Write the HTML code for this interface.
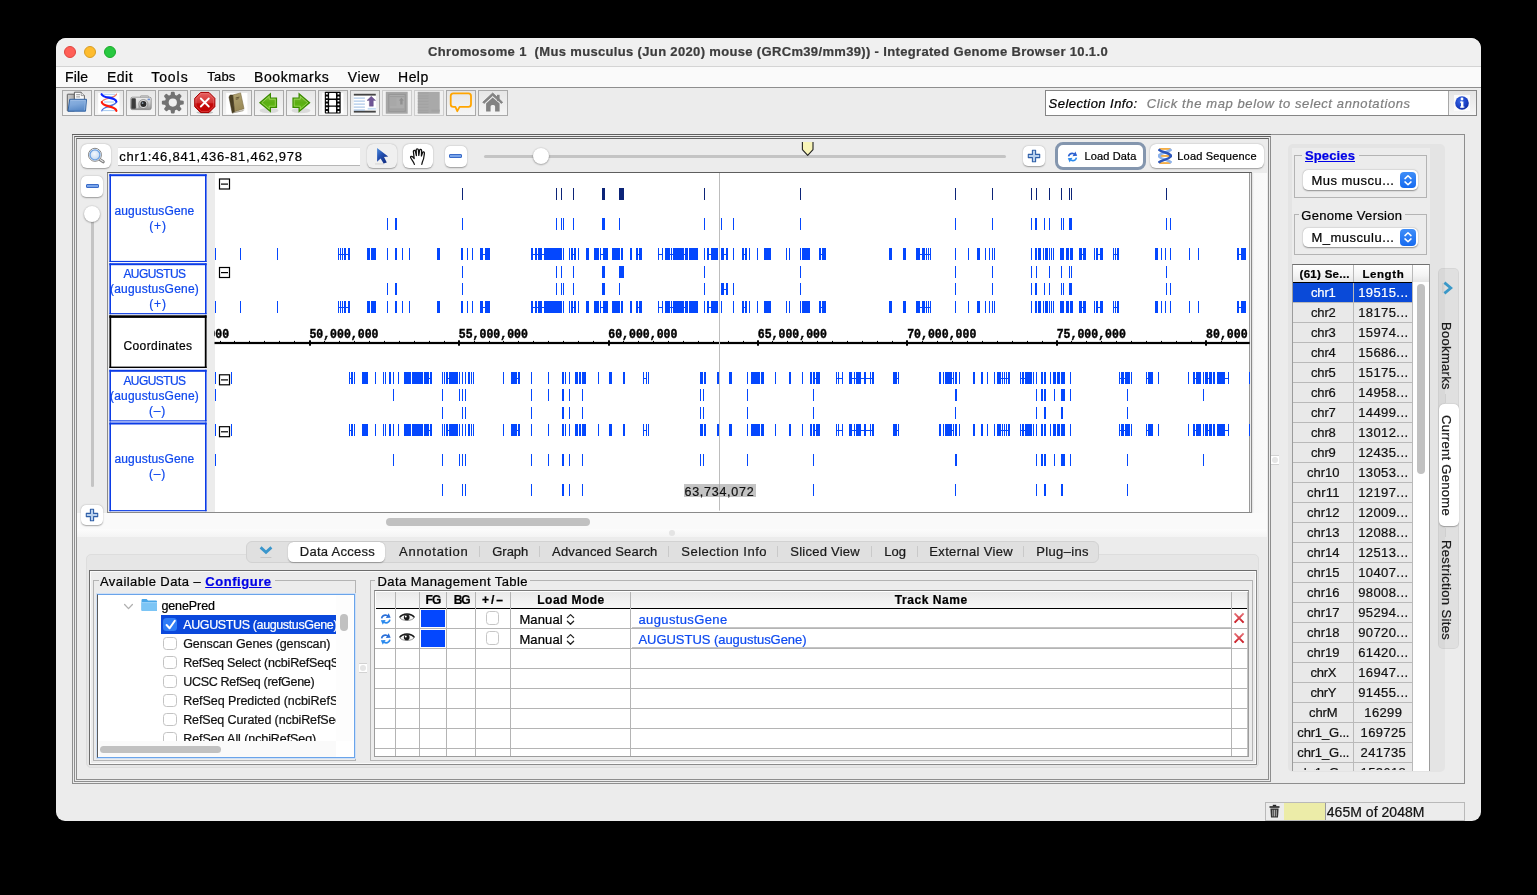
<!DOCTYPE html>
<html><head><meta charset="utf-8"><title>IGB</title>
<style>
html,body{margin:0;padding:0;background:#000;}
body{width:1537px;height:895px;position:relative;overflow:hidden;font-family:"Liberation Sans",sans-serif;}
div,span.t,svg{position:absolute;box-sizing:border-box;}
span.t{white-space:pre;display:block;-webkit-text-stroke:0.22px currentColor;}
</style></head><body><div id="w" style="left:0;top:0;width:1537px;height:895px;will-change:transform;">
<div style="left:56px;top:38px;width:1425px;height:783px;background:#ececec;border-radius:10px 10px 9px 9px;overflow:hidden;"></div>
<div style="left:56px;top:38px;width:1425px;height:29px;background:#f0f0f0;border-radius:10px 10px 0 0;border-bottom:1px solid #d4d4d4;"></div>
<div style="left:64px;top:46px;width:12px;height:12px;background:#ff5f57;border-radius:50%;border:0.5px solid #e0443e;"></div>
<div style="left:84px;top:46px;width:12px;height:12px;background:#febc2e;border-radius:50%;border:0.5px solid #d89e24;"></div>
<div style="left:104px;top:46px;width:12px;height:12px;background:#28c840;border-radius:50%;border:0.5px solid #1aab29;"></div>
<span class="t" style="left:428.00px;top:43.00px;height:17px;line-height:17px;font-size:13px;color:#3d3d3d;font-family:'Liberation Sans',sans-serif;font-weight:bold;letter-spacing:0.340px;">Chromosome 1  (Mus musculus (Jun 2020) mouse (GRCm39/mm39)) - Integrated Genome Browser 10.1.0</span>
<div style="left:56px;top:67px;width:1425px;height:20px;background:#fafafa;"></div>
<div style="left:56px;top:87px;width:1425px;height:1.2px;background:#8e8e8e;"></div>
<span class="t" style="left:65.00px;top:67.50px;height:18px;line-height:18px;font-size:14px;color:#000;font-family:'Liberation Sans',sans-serif;letter-spacing:0.184px;">File</span>
<span class="t" style="left:106.90px;top:67.50px;height:18px;line-height:18px;font-size:14px;color:#000;font-family:'Liberation Sans',sans-serif;letter-spacing:0.543px;">Edit</span>
<span class="t" style="left:151.20px;top:67.50px;height:18px;line-height:18px;font-size:14px;color:#000;font-family:'Liberation Sans',sans-serif;letter-spacing:0.943px;">Tools</span>
<span class="t" style="left:207.20px;top:68.00px;height:17px;line-height:17px;font-size:13px;color:#000;font-family:'Liberation Sans',sans-serif;letter-spacing:0.235px;">Tabs</span>
<span class="t" style="left:254.10px;top:67.50px;height:18px;line-height:18px;font-size:14px;color:#000;font-family:'Liberation Sans',sans-serif;letter-spacing:0.575px;">Bookmarks</span>
<span class="t" style="left:347.80px;top:67.50px;height:18px;line-height:18px;font-size:14px;color:#000;font-family:'Liberation Sans',sans-serif;letter-spacing:0.501px;">View</span>
<span class="t" style="left:398.10px;top:67.50px;height:18px;line-height:18px;font-size:14px;color:#000;font-family:'Liberation Sans',sans-serif;letter-spacing:0.426px;">Help</span>
<div style="left:62px;top:90px;width:30px;height:25.5px;background:linear-gradient(#e7e7e7,#f5f5f5);border:1px solid #a9a9a9;"></div>
<div style="left:94px;top:90px;width:30px;height:25.5px;background:linear-gradient(#e7e7e7,#f5f5f5);border:1px solid #a9a9a9;"></div>
<div style="left:126px;top:90px;width:30px;height:25.5px;background:linear-gradient(#e7e7e7,#f5f5f5);border:1px solid #a9a9a9;"></div>
<div style="left:158px;top:90px;width:30px;height:25.5px;background:linear-gradient(#e7e7e7,#f5f5f5);border:1px solid #a9a9a9;"></div>
<div style="left:190px;top:90px;width:30px;height:25.5px;background:linear-gradient(#e7e7e7,#f5f5f5);border:1px solid #a9a9a9;"></div>
<div style="left:222px;top:90px;width:30px;height:25.5px;background:linear-gradient(#e7e7e7,#f5f5f5);border:1px solid #a9a9a9;"></div>
<div style="left:254px;top:90px;width:30px;height:25.5px;background:linear-gradient(#e7e7e7,#f5f5f5);border:1px solid #a9a9a9;"></div>
<div style="left:286px;top:90px;width:30px;height:25.5px;background:linear-gradient(#e7e7e7,#f5f5f5);border:1px solid #a9a9a9;"></div>
<div style="left:318px;top:90px;width:30px;height:25.5px;background:linear-gradient(#e7e7e7,#f5f5f5);border:1px solid #a9a9a9;"></div>
<div style="left:350px;top:90px;width:30px;height:25.5px;background:linear-gradient(#e7e7e7,#f5f5f5);border:1px solid #a9a9a9;"></div>
<div style="left:382px;top:90px;width:30px;height:25.5px;background:#f0f0f0;border:1px solid #cdcdcd;"></div>
<div style="left:414px;top:90px;width:30px;height:25.5px;background:#f0f0f0;border:1px solid #cdcdcd;"></div>
<div style="left:446px;top:90px;width:30px;height:25.5px;background:linear-gradient(#e7e7e7,#f5f5f5);border:1px solid #a9a9a9;"></div>
<div style="left:478px;top:90px;width:30px;height:25.5px;background:linear-gradient(#e7e7e7,#f5f5f5);border:1px solid #a9a9a9;"></div>
<div style="left:1045px;top:90px;width:432px;height:26px;background:#fff;border:1px solid #858585;"></div>
<div style="left:1448px;top:91px;width:28px;height:24px;background:linear-gradient(#e4e4e4,#f6f6f6);border-left:1px solid #a8a8a8;"></div>
<div style="left:1454px;top:94.6px;width:16px;height:16px;background:#fbfbfb;"></div>
<span class="t" style="left:1048.60px;top:94.50px;height:17px;line-height:17px;font-size:13px;color:#000;font-family:'Liberation Sans',sans-serif;font-style:italic;letter-spacing:0.441px;">Selection Info:</span>
<span class="t" style="left:1146.70px;top:94.50px;height:17px;line-height:17px;font-size:13px;color:#7f7f7f;font-family:'Liberation Sans',sans-serif;font-style:italic;letter-spacing:0.605px;">Click the map below to select annotations</span>
<svg style="left:1453.6px;top:94.6px" width="16" height="16" viewBox="0 0 16 16"><defs><radialGradient id="inf" cx="0.4" cy="0.35" r="0.75"><stop offset="0" stop-color="#3a6ae8"/><stop offset="0.6" stop-color="#1a40c4"/><stop offset="1" stop-color="#0a2496"/></radialGradient></defs><circle cx="8" cy="8" r="6.8" fill="url(#inf)"/><rect x="7" y="6.5" width="2.4" height="6" fill="#fff"/><rect x="6" y="6.5" width="2" height="1.2" fill="#fff"/><rect x="6" y="11.5" width="4.4" height="1.1" fill="#fff"/><circle cx="8" cy="4" r="1.4" fill="#fff"/></svg>
<div style="left:72px;top:134px;width:1393px;height:650px;border:1px solid #8e8e8e;background:#ececec;"></div>
<div style="left:72px;top:134px;width:1199px;height:1px;background:#606060;"></div>
<div style="left:74px;top:136px;width:1197px;height:646px;border:1px solid #8e8e8e;border-top-color:#606060;"></div>
<div style="left:76px;top:138px;width:1193px;height:642px;border:1px solid #8e8e8e;border-top-color:#606060;"></div>
<div style="left:81px;top:144px;width:30px;height:24px;background:#fff;border-radius:6px;box-shadow:0 0.5px 1.5px rgba(0,0,0,.35);"></div>
<div style="left:118px;top:146.5px;width:242.3px;height:19px;background:#fff;border-top:1px solid #e2e2e2;border-bottom:1px solid #b6b6b6;"></div>
<span class="t" style="left:119.30px;top:147.90px;height:17px;line-height:17px;font-size:13px;color:#000;font-family:'Liberation Sans',sans-serif;letter-spacing:0.778px;">chr1:46,841,436-81,462,978</span>
<div style="left:367px;top:143.7px;width:30.3px;height:24.5px;background:#f0f0f0;border-radius:6px;box-shadow:0 0.5px 1.3px rgba(0,0,0,.32);"></div>
<div style="left:403px;top:144px;width:30px;height:24px;background:#fff;border-radius:6px;box-shadow:0 0.5px 1.5px rgba(0,0,0,.35);"></div>
<div style="left:444.5px;top:146px;width:22.5px;height:20.5px;background:#fff;border-radius:5px;box-shadow:0 0.5px 1.5px rgba(0,0,0,.35);"></div>
<div style="left:1023px;top:146px;width:22px;height:20px;background:#fff;border-radius:5px;box-shadow:0 0.5px 1.5px rgba(0,0,0,.35);"></div>
<div style="left:484px;top:155px;width:522px;height:2.5px;background:#c4c4c4;border-radius:2px;"></div>
<div style="left:533.3px;top:148.4px;width:16px;height:16px;background:#fff;border-radius:50%;box-shadow:0 0.5px 2px rgba(0,0,0,.45);"></div>
<div style="left:1055.3px;top:141.8px;width:90.3px;height:28.3px;background:#fff;border-radius:8px;border:3px solid #8496ae;"></div>
<div style="left:1150px;top:144px;width:114px;height:24px;background:#fff;border-radius:6px;box-shadow:0 0.5px 1.5px rgba(0,0,0,.35);"></div>
<span class="t" style="left:1084.50px;top:149.40px;height:14px;line-height:14px;font-size:11px;color:#000;font-family:'Liberation Sans',sans-serif;letter-spacing:0.138px;">Load Data</span>
<span class="t" style="left:1177.30px;top:149.40px;height:14px;line-height:14px;font-size:11px;color:#000;font-family:'Liberation Sans',sans-serif;letter-spacing:0.180px;">Load Sequence</span>
<div style="left:107px;top:172px;width:1145px;height:341px;border:1px solid #8a8a8a;border-top-color:#5e5e5e;background:#ececec;"></div>
<div style="left:1252px;top:173px;width:15px;height:340px;background:linear-gradient(90deg,#dedede,#f8f8f8 12%,#fafafa);"></div>
<div style="left:214.5px;top:173px;width:1035px;height:339px;background:#fff;"></div>
<div style="left:1249px;top:173px;width:1px;height:339px;background:#9a9a9a;"></div>
<div style="left:77px;top:513px;width:1190px;height:16px;background:#fafafa;"></div>
<div style="left:77px;top:529px;width:1190px;height:8px;background:linear-gradient(#fcfcfc,#f4f4f4);"></div>
<div style="left:81px;top:176px;width:22px;height:20.5px;background:#fff;border-radius:5px;box-shadow:0 0.5px 1.5px rgba(0,0,0,.35);"></div>
<div style="left:86px;top:183.8px;width:12.5px;height:4.2px;background:#7aa5ea;border:1px solid #3a6bc8;border-radius:1px;"></div>
<div style="left:91px;top:214px;width:2.5px;height:273px;background:#c4c4c4;border-radius:2px;"></div>
<div style="left:84.3px;top:206px;width:16px;height:16px;background:#fff;border-radius:50%;box-shadow:0 0.5px 2px rgba(0,0,0,.45);"></div>
<div style="left:81px;top:504.5px;width:22px;height:20.5px;background:#fff;border-radius:5px;box-shadow:0 0.5px 1.5px rgba(0,0,0,.35);"></div>
<svg style="left:108px;top:173px" width="100" height="339" viewBox="0 0 100 339"><rect x="1.4" y="1" width="97.2" height="337.4" fill="#f3f5fc"/><rect x="1.4" y="1.2" width="97.2" height="87.8" fill="#fff"/><rect x="1.4" y="1.2" width="97.2" height="2.0" fill="#0b3be6"/><rect x="1.4" y="87.9" width="97.2" height="1.1" fill="#0b3be6"/><rect x="1.4" y="1.2" width="1.6" height="87.8" fill="#0b3be6"/><rect x="97.0" y="1.2" width="1.6" height="87.8" fill="#0b3be6"/><rect x="1.4" y="90.2" width="97.2" height="51.0" fill="#fff"/><rect x="1.4" y="90.2" width="97.2" height="2.0" fill="#0b3be6"/><rect x="1.4" y="140.1" width="97.2" height="1.1" fill="#0b3be6"/><rect x="1.4" y="90.2" width="1.6" height="51.0" fill="#0b3be6"/><rect x="97.0" y="90.2" width="1.6" height="51.0" fill="#0b3be6"/><rect x="1.4" y="142.3" width="97.2" height="52.7" fill="#fff"/><rect x="1.4" y="142.3" width="97.2" height="2.6" fill="#000"/><rect x="1.4" y="193.6" width="97.2" height="1.4" fill="#000"/><rect x="1.4" y="142.3" width="1.8" height="52.7" fill="#000"/><rect x="96.8" y="142.3" width="1.8" height="52.7" fill="#000"/><rect x="1.4" y="196.8" width="97.2" height="51.6" fill="#fff"/><rect x="1.4" y="196.8" width="97.2" height="2.0" fill="#0b3be6"/><rect x="1.4" y="247.3" width="97.2" height="1.1" fill="#0b3be6"/><rect x="1.4" y="196.8" width="1.6" height="51.6" fill="#0b3be6"/><rect x="97.0" y="196.8" width="1.6" height="51.6" fill="#0b3be6"/><rect x="1.4" y="249.5" width="97.2" height="88.7" fill="#fff"/><rect x="1.4" y="249.5" width="97.2" height="2.0" fill="#0b3be6"/><rect x="1.4" y="337.1" width="97.2" height="1.1" fill="#0b3be6"/><rect x="1.4" y="249.5" width="1.6" height="88.7" fill="#0b3be6"/><rect x="97.0" y="249.5" width="1.6" height="88.7" fill="#0b3be6"/></svg>
<span class="t" style="left:114.40px;top:202.70px;height:16px;line-height:16px;font-size:12px;color:#0f48ee;font-family:'Liberation Sans',sans-serif;letter-spacing:0.162px;">augustusGene</span>
<span class="t" style="left:149.25px;top:217.60px;height:16px;line-height:16px;font-size:12px;color:#0f48ee;font-family:'Liberation Sans',sans-serif;letter-spacing:0.833px;">(+)</span>
<span class="t" style="left:123.40px;top:266.00px;height:16px;line-height:16px;font-size:12px;color:#0f48ee;font-family:'Liberation Sans',sans-serif;letter-spacing:-0.584px;">AUGUSTUS</span>
<span class="t" style="left:110.00px;top:280.50px;height:16px;line-height:16px;font-size:12px;color:#0f48ee;font-family:'Liberation Sans',sans-serif;letter-spacing:0.211px;">(augustusGene)</span>
<span class="t" style="left:149.25px;top:295.80px;height:16px;line-height:16px;font-size:12px;color:#0f48ee;font-family:'Liberation Sans',sans-serif;letter-spacing:0.833px;">(+)</span>
<span class="t" style="left:123.50px;top:337.70px;height:16px;line-height:16px;font-size:12px;color:#000;font-family:'Liberation Sans',sans-serif;letter-spacing:0.390px;">Coordinates</span>
<span class="t" style="left:123.40px;top:373.30px;height:16px;line-height:16px;font-size:12px;color:#0f48ee;font-family:'Liberation Sans',sans-serif;letter-spacing:-0.584px;">AUGUSTUS</span>
<span class="t" style="left:110.00px;top:387.70px;height:16px;line-height:16px;font-size:12px;color:#0f48ee;font-family:'Liberation Sans',sans-serif;letter-spacing:0.211px;">(augustusGene)</span>
<span class="t" style="left:149.00px;top:403.00px;height:16px;line-height:16px;font-size:12px;color:#0f48ee;font-family:'Liberation Sans',sans-serif;letter-spacing:0.778px;">(–)</span>
<span class="t" style="left:114.40px;top:450.70px;height:16px;line-height:16px;font-size:12px;color:#0f48ee;font-family:'Liberation Sans',sans-serif;letter-spacing:0.162px;">augustusGene</span>
<span class="t" style="left:149.00px;top:465.60px;height:16px;line-height:16px;font-size:12px;color:#0f48ee;font-family:'Liberation Sans',sans-serif;letter-spacing:0.778px;">(–)</span>
<div style="left:386px;top:518.2px;width:204px;height:7.6px;background:#c1c1c1;border-radius:4px;"></div>
<svg style="left:214px;top:173px;overflow:hidden" width="1035.5" height="339" viewBox="0 0 1035.5 339"><rect x="248" y="15" width="1" height="12" fill="#0c2478"/><rect x="342" y="15" width="1" height="12" fill="#0c2478"/><rect x="347" y="15" width="1" height="12" fill="#0c2478"/><rect x="359" y="15" width="1" height="12" fill="#0c2478"/><rect x="388" y="15" width="3" height="12" fill="#0c2478"/><rect x="405" y="15" width="5" height="12" fill="#0c2478"/><rect x="490" y="15" width="1" height="12" fill="#0c2478"/><rect x="586" y="15" width="1" height="12" fill="#0c2478"/><rect x="741" y="15" width="1" height="12" fill="#0c2478"/><rect x="778" y="15" width="1" height="12" fill="#0c2478"/><rect x="817" y="15" width="1" height="12" fill="#0c2478"/><rect x="822" y="15" width="1" height="12" fill="#0c2478"/><rect x="835" y="15" width="1" height="12" fill="#0c2478"/><rect x="847" y="15" width="1" height="12" fill="#0c2478"/><rect x="855" y="15" width="1" height="12" fill="#0c2478"/><rect x="857" y="15" width="1" height="12" fill="#0c2478"/><rect x="952" y="15" width="1" height="12" fill="#0c2478"/><rect x="173" y="45" width="1" height="12" fill="#0447fe"/><rect x="181" y="45" width="2" height="12" fill="#0447fe"/><rect x="248" y="45" width="1" height="12" fill="#0447fe"/><rect x="342" y="45" width="1" height="12" fill="#0447fe"/><rect x="347" y="45" width="1" height="12" fill="#0447fe"/><rect x="349" y="45" width="1" height="12" fill="#0447fe"/><rect x="359" y="45" width="1" height="12" fill="#0447fe"/><rect x="388" y="45" width="3" height="12" fill="#0447fe"/><rect x="405" y="45" width="1" height="12" fill="#0447fe"/><rect x="490" y="45" width="1" height="12" fill="#0447fe"/><rect x="586" y="45" width="1" height="12" fill="#0447fe"/><rect x="741" y="45" width="1" height="12" fill="#0447fe"/><rect x="778" y="45" width="1" height="12" fill="#0447fe"/><rect x="817" y="45" width="1" height="12" fill="#0447fe"/><rect x="821" y="45" width="2" height="12" fill="#0447fe"/><rect x="830" y="45" width="1" height="12" fill="#0447fe"/><rect x="835" y="45" width="1" height="12" fill="#0447fe"/><rect x="847" y="45" width="1" height="12" fill="#0447fe"/><rect x="849" y="45" width="1" height="12" fill="#0447fe"/><rect x="855" y="45" width="3" height="12" fill="#0447fe"/><rect x="952" y="45" width="1" height="12" fill="#0447fe"/><rect x="956" y="45" width="1" height="12" fill="#0447fe"/><rect x="507" y="45" width="1" height="12" fill="#0447fe"/><rect x="519" y="45" width="1" height="12" fill="#0447fe"/><rect x="1" y="75" width="1" height="12" fill="#0447fe"/><rect x="26" y="75" width="1" height="12" fill="#0447fe"/><rect x="63" y="75" width="1" height="12" fill="#0447fe"/><rect x="124" y="75" width="1" height="12" fill="#0447fe"/><rect x="126" y="75" width="1" height="12" fill="#0447fe"/><rect x="128" y="75" width="1" height="12" fill="#0447fe"/><rect x="130" y="75" width="2" height="12" fill="#0447fe"/><rect x="124" y="81" width="10" height="1" fill="#0447fe"/><rect x="134" y="75" width="2" height="12" fill="#0447fe"/><rect x="153" y="75" width="3" height="12" fill="#0447fe"/><rect x="157" y="75" width="5" height="12" fill="#0447fe"/><rect x="173" y="75" width="1" height="12" fill="#0447fe"/><rect x="181" y="75" width="2" height="12" fill="#0447fe"/><rect x="188" y="75" width="1" height="12" fill="#0447fe"/><rect x="195" y="75" width="1" height="12" fill="#0447fe"/><rect x="223" y="75" width="3" height="12" fill="#0447fe"/><rect x="247" y="75" width="2" height="12" fill="#0447fe"/><rect x="253" y="75" width="1" height="12" fill="#0447fe"/><rect x="258" y="75" width="1" height="12" fill="#0447fe"/><rect x="266" y="75" width="3" height="12" fill="#0447fe"/><rect x="269" y="81" width="2" height="1" fill="#0447fe"/><rect x="271" y="75" width="5" height="12" fill="#0447fe"/><rect x="317" y="75" width="2" height="12" fill="#0447fe"/><rect x="319" y="81" width="2" height="1" fill="#0447fe"/><rect x="321" y="75" width="2" height="12" fill="#0447fe"/><rect x="323" y="81" width="1" height="1" fill="#0447fe"/><rect x="324" y="75" width="4" height="12" fill="#0447fe"/><rect x="328" y="81" width="2" height="1" fill="#0447fe"/><rect x="330" y="75" width="18" height="12" fill="#0447fe"/><rect x="349" y="75" width="1" height="12" fill="#0447fe"/><rect x="355" y="75" width="1" height="12" fill="#0447fe"/><rect x="357" y="75" width="2" height="12" fill="#0447fe"/><rect x="359" y="81" width="1" height="1" fill="#0447fe"/><rect x="360" y="75" width="2" height="12" fill="#0447fe"/><rect x="364" y="75" width="1" height="12" fill="#0447fe"/><rect x="372" y="75" width="3" height="12" fill="#0447fe"/><rect x="380" y="75" width="5" height="12" fill="#0447fe"/><rect x="386" y="75" width="1" height="12" fill="#0447fe"/><rect x="387" y="81" width="2" height="1" fill="#0447fe"/><rect x="389" y="75" width="5" height="12" fill="#0447fe"/><rect x="398" y="75" width="8" height="12" fill="#0447fe"/><rect x="407" y="75" width="2" height="12" fill="#0447fe"/><rect x="416" y="75" width="2" height="12" fill="#0447fe"/><rect x="422" y="75" width="2" height="12" fill="#0447fe"/><rect x="424" y="81" width="1" height="1" fill="#0447fe"/><rect x="425" y="75" width="3" height="12" fill="#0447fe"/><rect x="444" y="75" width="1" height="12" fill="#0447fe"/><rect x="445" y="81" width="3" height="1" fill="#0447fe"/><rect x="448" y="75" width="1" height="12" fill="#0447fe"/><rect x="451" y="75" width="5" height="12" fill="#0447fe"/><rect x="456" y="81" width="3" height="1" fill="#0447fe"/><rect x="457" y="75" width="1" height="12" fill="#0447fe"/><rect x="459" y="75" width="11" height="12" fill="#0447fe"/><rect x="470" y="81" width="1" height="1" fill="#0447fe"/><rect x="471" y="75" width="3" height="12" fill="#0447fe"/><rect x="475" y="75" width="9" height="12" fill="#0447fe"/><rect x="490" y="75" width="1" height="12" fill="#0447fe"/><rect x="493" y="75" width="2" height="12" fill="#0447fe"/><rect x="495" y="81" width="2" height="1" fill="#0447fe"/><rect x="497" y="75" width="7" height="12" fill="#0447fe"/><rect x="507" y="75" width="3" height="12" fill="#0447fe"/><rect x="510" y="81" width="2" height="1" fill="#0447fe"/><rect x="512" y="75" width="2" height="12" fill="#0447fe"/><rect x="519" y="75" width="1" height="12" fill="#0447fe"/><rect x="528" y="75" width="2" height="12" fill="#0447fe"/><rect x="530" y="81" width="1" height="1" fill="#0447fe"/><rect x="531" y="75" width="2" height="12" fill="#0447fe"/><rect x="535" y="75" width="1" height="12" fill="#0447fe"/><rect x="543" y="75" width="1" height="12" fill="#0447fe"/><rect x="550" y="75" width="7" height="12" fill="#0447fe"/><rect x="572" y="75" width="1" height="12" fill="#0447fe"/><rect x="575" y="75" width="1" height="12" fill="#0447fe"/><rect x="586" y="75" width="1" height="12" fill="#0447fe"/><rect x="588" y="75" width="8" height="12" fill="#0447fe"/><rect x="605" y="75" width="2" height="12" fill="#0447fe"/><rect x="607" y="81" width="1" height="1" fill="#0447fe"/><rect x="608" y="75" width="4" height="12" fill="#0447fe"/><rect x="675" y="75" width="3" height="12" fill="#0447fe"/><rect x="689" y="75" width="3" height="12" fill="#0447fe"/><rect x="702" y="75" width="4" height="12" fill="#0447fe"/><rect x="706" y="81" width="2" height="1" fill="#0447fe"/><rect x="708" y="75" width="3" height="12" fill="#0447fe"/><rect x="711" y="81" width="5" height="1" fill="#0447fe"/><rect x="712" y="75" width="1" height="12" fill="#0447fe"/><rect x="714" y="75" width="1" height="12" fill="#0447fe"/><rect x="716" y="75" width="1" height="12" fill="#0447fe"/><rect x="741" y="75" width="1" height="12" fill="#0447fe"/><rect x="754" y="75" width="1" height="12" fill="#0447fe"/><rect x="763" y="75" width="3" height="12" fill="#0447fe"/><rect x="771" y="75" width="1" height="12" fill="#0447fe"/><rect x="775" y="75" width="1" height="12" fill="#0447fe"/><rect x="778" y="75" width="1" height="12" fill="#0447fe"/><rect x="780" y="75" width="1" height="12" fill="#0447fe"/><rect x="817" y="75" width="1" height="12" fill="#0447fe"/><rect x="821" y="75" width="2" height="12" fill="#0447fe"/><rect x="824" y="75" width="3" height="12" fill="#0447fe"/><rect x="829" y="75" width="1" height="12" fill="#0447fe"/><rect x="831" y="75" width="3" height="12" fill="#0447fe"/><rect x="835" y="75" width="1" height="12" fill="#0447fe"/><rect x="837" y="75" width="1" height="12" fill="#0447fe"/><rect x="839" y="75" width="1" height="12" fill="#0447fe"/><rect x="846" y="75" width="4" height="12" fill="#0447fe"/><rect x="852" y="75" width="3" height="12" fill="#0447fe"/><rect x="856" y="75" width="3" height="12" fill="#0447fe"/><rect x="865" y="75" width="3" height="12" fill="#0447fe"/><rect x="868" y="81" width="1" height="1" fill="#0447fe"/><rect x="869" y="75" width="3" height="12" fill="#0447fe"/><rect x="880" y="75" width="1" height="12" fill="#0447fe"/><rect x="882" y="75" width="2" height="12" fill="#0447fe"/><rect x="884" y="81" width="2" height="1" fill="#0447fe"/><rect x="886" y="75" width="3" height="12" fill="#0447fe"/><rect x="899" y="75" width="1" height="12" fill="#0447fe"/><rect x="901" y="75" width="1" height="12" fill="#0447fe"/><rect x="899" y="81" width="4" height="1" fill="#0447fe"/><rect x="903" y="75" width="2" height="12" fill="#0447fe"/><rect x="941" y="75" width="3" height="12" fill="#0447fe"/><rect x="947" y="75" width="1" height="12" fill="#0447fe"/><rect x="951" y="75" width="1" height="12" fill="#0447fe"/><rect x="956" y="75" width="1" height="12" fill="#0447fe"/><rect x="975" y="75" width="1" height="12" fill="#0447fe"/><rect x="984" y="75" width="1" height="12" fill="#0447fe"/><rect x="1023" y="75" width="2" height="12" fill="#0447fe"/><rect x="1025" y="81" width="2" height="1" fill="#0447fe"/><rect x="1027" y="75" width="5" height="12" fill="#0447fe"/><rect x="248" y="93" width="1" height="12" fill="#0447fe"/><rect x="342" y="93" width="1" height="12" fill="#0447fe"/><rect x="347" y="93" width="1" height="12" fill="#0447fe"/><rect x="359" y="93" width="1" height="12" fill="#0447fe"/><rect x="388" y="93" width="3" height="12" fill="#0447fe"/><rect x="405" y="93" width="5" height="12" fill="#0447fe"/><rect x="490" y="93" width="1" height="12" fill="#0447fe"/><rect x="586" y="93" width="1" height="12" fill="#0447fe"/><rect x="741" y="93" width="1" height="12" fill="#0447fe"/><rect x="778" y="93" width="1" height="12" fill="#0447fe"/><rect x="817" y="93" width="1" height="12" fill="#0447fe"/><rect x="822" y="93" width="1" height="12" fill="#0447fe"/><rect x="835" y="93" width="1" height="12" fill="#0447fe"/><rect x="847" y="93" width="1" height="12" fill="#0447fe"/><rect x="855" y="93" width="1" height="12" fill="#0447fe"/><rect x="857" y="93" width="1" height="12" fill="#0447fe"/><rect x="952" y="93" width="1" height="12" fill="#0447fe"/><rect x="173" y="110" width="1" height="12" fill="#0447fe"/><rect x="181" y="110" width="2" height="12" fill="#0447fe"/><rect x="248" y="110" width="1" height="12" fill="#0447fe"/><rect x="342" y="110" width="1" height="12" fill="#0447fe"/><rect x="347" y="110" width="1" height="12" fill="#0447fe"/><rect x="349" y="110" width="1" height="12" fill="#0447fe"/><rect x="359" y="110" width="1" height="12" fill="#0447fe"/><rect x="388" y="110" width="3" height="12" fill="#0447fe"/><rect x="405" y="110" width="1" height="12" fill="#0447fe"/><rect x="490" y="110" width="1" height="12" fill="#0447fe"/><rect x="586" y="110" width="1" height="12" fill="#0447fe"/><rect x="741" y="110" width="1" height="12" fill="#0447fe"/><rect x="778" y="110" width="1" height="12" fill="#0447fe"/><rect x="817" y="110" width="1" height="12" fill="#0447fe"/><rect x="821" y="110" width="2" height="12" fill="#0447fe"/><rect x="830" y="110" width="1" height="12" fill="#0447fe"/><rect x="835" y="110" width="1" height="12" fill="#0447fe"/><rect x="847" y="110" width="1" height="12" fill="#0447fe"/><rect x="849" y="110" width="1" height="12" fill="#0447fe"/><rect x="855" y="110" width="3" height="12" fill="#0447fe"/><rect x="952" y="110" width="1" height="12" fill="#0447fe"/><rect x="956" y="110" width="1" height="12" fill="#0447fe"/><rect x="507" y="110" width="3" height="12" fill="#0447fe"/><rect x="510" y="116" width="2" height="1" fill="#0447fe"/><rect x="512" y="110" width="2" height="12" fill="#0447fe"/><rect x="519" y="110" width="1" height="12" fill="#0447fe"/><rect x="1" y="128" width="1" height="12" fill="#0447fe"/><rect x="26" y="128" width="1" height="12" fill="#0447fe"/><rect x="63" y="128" width="1" height="12" fill="#0447fe"/><rect x="124" y="128" width="1" height="12" fill="#0447fe"/><rect x="126" y="128" width="1" height="12" fill="#0447fe"/><rect x="128" y="128" width="1" height="12" fill="#0447fe"/><rect x="130" y="128" width="2" height="12" fill="#0447fe"/><rect x="124" y="134" width="10" height="1" fill="#0447fe"/><rect x="134" y="128" width="2" height="12" fill="#0447fe"/><rect x="153" y="128" width="3" height="12" fill="#0447fe"/><rect x="157" y="128" width="5" height="12" fill="#0447fe"/><rect x="173" y="128" width="1" height="12" fill="#0447fe"/><rect x="181" y="128" width="2" height="12" fill="#0447fe"/><rect x="188" y="128" width="1" height="12" fill="#0447fe"/><rect x="195" y="128" width="1" height="12" fill="#0447fe"/><rect x="223" y="128" width="3" height="12" fill="#0447fe"/><rect x="247" y="128" width="2" height="12" fill="#0447fe"/><rect x="253" y="128" width="1" height="12" fill="#0447fe"/><rect x="258" y="128" width="1" height="12" fill="#0447fe"/><rect x="266" y="128" width="3" height="12" fill="#0447fe"/><rect x="269" y="134" width="2" height="1" fill="#0447fe"/><rect x="271" y="128" width="5" height="12" fill="#0447fe"/><rect x="317" y="128" width="2" height="12" fill="#0447fe"/><rect x="319" y="134" width="2" height="1" fill="#0447fe"/><rect x="321" y="128" width="2" height="12" fill="#0447fe"/><rect x="323" y="134" width="1" height="1" fill="#0447fe"/><rect x="324" y="128" width="4" height="12" fill="#0447fe"/><rect x="328" y="134" width="2" height="1" fill="#0447fe"/><rect x="330" y="128" width="18" height="12" fill="#0447fe"/><rect x="349" y="128" width="1" height="12" fill="#0447fe"/><rect x="355" y="128" width="1" height="12" fill="#0447fe"/><rect x="357" y="128" width="2" height="12" fill="#0447fe"/><rect x="359" y="134" width="1" height="1" fill="#0447fe"/><rect x="360" y="128" width="2" height="12" fill="#0447fe"/><rect x="364" y="128" width="1" height="12" fill="#0447fe"/><rect x="372" y="128" width="3" height="12" fill="#0447fe"/><rect x="380" y="128" width="5" height="12" fill="#0447fe"/><rect x="386" y="128" width="1" height="12" fill="#0447fe"/><rect x="387" y="134" width="2" height="1" fill="#0447fe"/><rect x="389" y="128" width="5" height="12" fill="#0447fe"/><rect x="398" y="128" width="8" height="12" fill="#0447fe"/><rect x="407" y="128" width="2" height="12" fill="#0447fe"/><rect x="416" y="128" width="2" height="12" fill="#0447fe"/><rect x="422" y="128" width="2" height="12" fill="#0447fe"/><rect x="424" y="134" width="1" height="1" fill="#0447fe"/><rect x="425" y="128" width="3" height="12" fill="#0447fe"/><rect x="444" y="128" width="1" height="12" fill="#0447fe"/><rect x="445" y="134" width="3" height="1" fill="#0447fe"/><rect x="448" y="128" width="1" height="12" fill="#0447fe"/><rect x="451" y="128" width="5" height="12" fill="#0447fe"/><rect x="456" y="134" width="3" height="1" fill="#0447fe"/><rect x="457" y="128" width="1" height="12" fill="#0447fe"/><rect x="459" y="128" width="11" height="12" fill="#0447fe"/><rect x="470" y="134" width="1" height="1" fill="#0447fe"/><rect x="471" y="128" width="3" height="12" fill="#0447fe"/><rect x="475" y="128" width="9" height="12" fill="#0447fe"/><rect x="490" y="128" width="1" height="12" fill="#0447fe"/><rect x="493" y="128" width="2" height="12" fill="#0447fe"/><rect x="495" y="134" width="2" height="1" fill="#0447fe"/><rect x="497" y="128" width="7" height="12" fill="#0447fe"/><rect x="519" y="128" width="1" height="12" fill="#0447fe"/><rect x="528" y="128" width="2" height="12" fill="#0447fe"/><rect x="530" y="134" width="1" height="1" fill="#0447fe"/><rect x="531" y="128" width="2" height="12" fill="#0447fe"/><rect x="535" y="128" width="1" height="12" fill="#0447fe"/><rect x="543" y="128" width="1" height="12" fill="#0447fe"/><rect x="550" y="128" width="7" height="12" fill="#0447fe"/><rect x="572" y="128" width="1" height="12" fill="#0447fe"/><rect x="575" y="128" width="1" height="12" fill="#0447fe"/><rect x="586" y="128" width="1" height="12" fill="#0447fe"/><rect x="588" y="128" width="8" height="12" fill="#0447fe"/><rect x="605" y="128" width="2" height="12" fill="#0447fe"/><rect x="607" y="134" width="1" height="1" fill="#0447fe"/><rect x="608" y="128" width="4" height="12" fill="#0447fe"/><rect x="675" y="128" width="3" height="12" fill="#0447fe"/><rect x="689" y="128" width="3" height="12" fill="#0447fe"/><rect x="702" y="128" width="4" height="12" fill="#0447fe"/><rect x="706" y="134" width="2" height="1" fill="#0447fe"/><rect x="708" y="128" width="3" height="12" fill="#0447fe"/><rect x="711" y="134" width="5" height="1" fill="#0447fe"/><rect x="712" y="128" width="1" height="12" fill="#0447fe"/><rect x="714" y="128" width="1" height="12" fill="#0447fe"/><rect x="716" y="128" width="1" height="12" fill="#0447fe"/><rect x="741" y="128" width="1" height="12" fill="#0447fe"/><rect x="754" y="128" width="1" height="12" fill="#0447fe"/><rect x="763" y="128" width="3" height="12" fill="#0447fe"/><rect x="771" y="128" width="1" height="12" fill="#0447fe"/><rect x="775" y="128" width="1" height="12" fill="#0447fe"/><rect x="778" y="128" width="1" height="12" fill="#0447fe"/><rect x="780" y="128" width="1" height="12" fill="#0447fe"/><rect x="817" y="128" width="1" height="12" fill="#0447fe"/><rect x="821" y="128" width="2" height="12" fill="#0447fe"/><rect x="824" y="128" width="3" height="12" fill="#0447fe"/><rect x="829" y="128" width="1" height="12" fill="#0447fe"/><rect x="831" y="128" width="3" height="12" fill="#0447fe"/><rect x="835" y="128" width="1" height="12" fill="#0447fe"/><rect x="837" y="128" width="1" height="12" fill="#0447fe"/><rect x="839" y="128" width="1" height="12" fill="#0447fe"/><rect x="846" y="128" width="4" height="12" fill="#0447fe"/><rect x="852" y="128" width="3" height="12" fill="#0447fe"/><rect x="856" y="128" width="3" height="12" fill="#0447fe"/><rect x="865" y="128" width="3" height="12" fill="#0447fe"/><rect x="868" y="134" width="1" height="1" fill="#0447fe"/><rect x="869" y="128" width="3" height="12" fill="#0447fe"/><rect x="880" y="128" width="1" height="12" fill="#0447fe"/><rect x="882" y="128" width="2" height="12" fill="#0447fe"/><rect x="884" y="134" width="2" height="1" fill="#0447fe"/><rect x="886" y="128" width="3" height="12" fill="#0447fe"/><rect x="899" y="128" width="1" height="12" fill="#0447fe"/><rect x="901" y="128" width="1" height="12" fill="#0447fe"/><rect x="899" y="134" width="4" height="1" fill="#0447fe"/><rect x="903" y="128" width="2" height="12" fill="#0447fe"/><rect x="941" y="128" width="3" height="12" fill="#0447fe"/><rect x="947" y="128" width="1" height="12" fill="#0447fe"/><rect x="951" y="128" width="1" height="12" fill="#0447fe"/><rect x="956" y="128" width="1" height="12" fill="#0447fe"/><rect x="975" y="128" width="1" height="12" fill="#0447fe"/><rect x="984" y="128" width="1" height="12" fill="#0447fe"/><rect x="1023" y="128" width="2" height="12" fill="#0447fe"/><rect x="1025" y="134" width="2" height="1" fill="#0447fe"/><rect x="1027" y="128" width="5" height="12" fill="#0447fe"/><rect x="507" y="128" width="1" height="12" fill="#0447fe"/><rect x="1" y="199" width="1" height="12" fill="#0447fe"/><rect x="17" y="199" width="1" height="12" fill="#0447fe"/><rect x="135" y="199" width="1" height="12" fill="#0447fe"/><rect x="136" y="205" width="1" height="1" fill="#0447fe"/><rect x="137" y="199" width="2" height="12" fill="#0447fe"/><rect x="140" y="199" width="1" height="12" fill="#0447fe"/><rect x="148" y="199" width="6" height="12" fill="#0447fe"/><rect x="161" y="199" width="1" height="12" fill="#0447fe"/><rect x="169" y="199" width="1" height="12" fill="#0447fe"/><rect x="171" y="199" width="1" height="12" fill="#0447fe"/><rect x="175" y="199" width="2" height="12" fill="#0447fe"/><rect x="179" y="199" width="1" height="12" fill="#0447fe"/><rect x="184" y="199" width="1" height="12" fill="#0447fe"/><rect x="190" y="199" width="7" height="12" fill="#0447fe"/><rect x="198" y="199" width="11" height="12" fill="#0447fe"/><rect x="210" y="199" width="5" height="12" fill="#0447fe"/><rect x="215" y="205" width="1" height="1" fill="#0447fe"/><rect x="216" y="199" width="2" height="12" fill="#0447fe"/><rect x="228" y="199" width="1" height="12" fill="#0447fe"/><rect x="230" y="199" width="1" height="12" fill="#0447fe"/><rect x="232" y="199" width="2" height="12" fill="#0447fe"/><rect x="234" y="205" width="1" height="1" fill="#0447fe"/><rect x="235" y="199" width="9" height="12" fill="#0447fe"/><rect x="245" y="199" width="1" height="12" fill="#0447fe"/><rect x="248" y="199" width="1" height="12" fill="#0447fe"/><rect x="251" y="199" width="1" height="12" fill="#0447fe"/><rect x="254" y="199" width="2" height="12" fill="#0447fe"/><rect x="257" y="199" width="1" height="12" fill="#0447fe"/><rect x="259" y="199" width="1" height="12" fill="#0447fe"/><rect x="289" y="199" width="1" height="12" fill="#0447fe"/><rect x="297" y="199" width="6" height="12" fill="#0447fe"/><rect x="303" y="205" width="1" height="1" fill="#0447fe"/><rect x="304" y="199" width="2" height="12" fill="#0447fe"/><rect x="317" y="199" width="1" height="12" fill="#0447fe"/><rect x="334" y="199" width="1" height="12" fill="#0447fe"/><rect x="348" y="199" width="2" height="12" fill="#0447fe"/><rect x="351" y="199" width="1" height="12" fill="#0447fe"/><rect x="355" y="199" width="1" height="12" fill="#0447fe"/><rect x="361" y="199" width="3" height="12" fill="#0447fe"/><rect x="365" y="199" width="2" height="12" fill="#0447fe"/><rect x="368" y="199" width="4" height="12" fill="#0447fe"/><rect x="384" y="199" width="1" height="12" fill="#0447fe"/><rect x="395" y="199" width="3" height="12" fill="#0447fe"/><rect x="409" y="199" width="2" height="12" fill="#0447fe"/><rect x="429" y="199" width="1" height="12" fill="#0447fe"/><rect x="430" y="205" width="2" height="1" fill="#0447fe"/><rect x="432" y="199" width="1" height="12" fill="#0447fe"/><rect x="434" y="199" width="1" height="12" fill="#0447fe"/><rect x="486" y="199" width="3" height="12" fill="#0447fe"/><rect x="490" y="199" width="2" height="12" fill="#0447fe"/><rect x="503" y="199" width="2" height="12" fill="#0447fe"/><rect x="515" y="199" width="3" height="12" fill="#0447fe"/><rect x="533" y="199" width="1" height="12" fill="#0447fe"/><rect x="537" y="199" width="9" height="12" fill="#0447fe"/><rect x="547" y="199" width="3" height="12" fill="#0447fe"/><rect x="561" y="199" width="1" height="12" fill="#0447fe"/><rect x="575" y="199" width="2" height="12" fill="#0447fe"/><rect x="588" y="199" width="1" height="12" fill="#0447fe"/><rect x="596" y="199" width="2" height="12" fill="#0447fe"/><rect x="599" y="199" width="2" height="12" fill="#0447fe"/><rect x="601" y="205" width="1" height="1" fill="#0447fe"/><rect x="602" y="199" width="4" height="12" fill="#0447fe"/><rect x="622" y="199" width="1" height="12" fill="#0447fe"/><rect x="624" y="199" width="1" height="12" fill="#0447fe"/><rect x="622" y="205" width="6" height="1" fill="#0447fe"/><rect x="628" y="199" width="1" height="12" fill="#0447fe"/><rect x="635" y="199" width="3" height="12" fill="#0447fe"/><rect x="638" y="205" width="20" height="1" fill="#0447fe"/><rect x="640" y="199" width="1" height="12" fill="#0447fe"/><rect x="642" y="199" width="5" height="12" fill="#0447fe"/><rect x="650" y="199" width="2" height="12" fill="#0447fe"/><rect x="656" y="199" width="1" height="12" fill="#0447fe"/><rect x="658" y="199" width="2" height="12" fill="#0447fe"/><rect x="679" y="199" width="4" height="12" fill="#0447fe"/><rect x="683" y="205" width="1" height="1" fill="#0447fe"/><rect x="684" y="199" width="1" height="12" fill="#0447fe"/><rect x="725" y="199" width="2" height="12" fill="#0447fe"/><rect x="729" y="199" width="1" height="12" fill="#0447fe"/><rect x="731" y="199" width="7" height="12" fill="#0447fe"/><rect x="738" y="205" width="1" height="1" fill="#0447fe"/><rect x="739" y="199" width="1" height="12" fill="#0447fe"/><rect x="741" y="199" width="2" height="12" fill="#0447fe"/><rect x="745" y="199" width="1" height="12" fill="#0447fe"/><rect x="759" y="199" width="2" height="12" fill="#0447fe"/><rect x="767" y="199" width="2" height="12" fill="#0447fe"/><rect x="773" y="199" width="1" height="12" fill="#0447fe"/><rect x="780" y="199" width="1" height="12" fill="#0447fe"/><rect x="783" y="199" width="4" height="12" fill="#0447fe"/><rect x="787" y="205" width="7" height="1" fill="#0447fe"/><rect x="788" y="199" width="1" height="12" fill="#0447fe"/><rect x="790" y="199" width="1" height="12" fill="#0447fe"/><rect x="792" y="199" width="1" height="12" fill="#0447fe"/><rect x="794" y="199" width="2" height="12" fill="#0447fe"/><rect x="806" y="199" width="1" height="12" fill="#0447fe"/><rect x="807" y="205" width="4" height="1" fill="#0447fe"/><rect x="808" y="199" width="2" height="12" fill="#0447fe"/><rect x="811" y="199" width="7" height="12" fill="#0447fe"/><rect x="819" y="199" width="1" height="12" fill="#0447fe"/><rect x="822" y="199" width="1" height="12" fill="#0447fe"/><rect x="827" y="199" width="2" height="12" fill="#0447fe"/><rect x="830" y="199" width="2" height="12" fill="#0447fe"/><rect x="836" y="199" width="1" height="12" fill="#0447fe"/><rect x="839" y="199" width="3" height="12" fill="#0447fe"/><rect x="843" y="199" width="3" height="12" fill="#0447fe"/><rect x="847" y="199" width="4" height="12" fill="#0447fe"/><rect x="856" y="199" width="1" height="12" fill="#0447fe"/><rect x="905" y="199" width="1" height="12" fill="#0447fe"/><rect x="906" y="205" width="5" height="1" fill="#0447fe"/><rect x="907" y="199" width="3" height="12" fill="#0447fe"/><rect x="911" y="199" width="5" height="12" fill="#0447fe"/><rect x="917" y="199" width="1" height="12" fill="#0447fe"/><rect x="932" y="199" width="1" height="12" fill="#0447fe"/><rect x="933" y="205" width="1" height="1" fill="#0447fe"/><rect x="934" y="199" width="5" height="12" fill="#0447fe"/><rect x="944" y="199" width="1" height="12" fill="#0447fe"/><rect x="974" y="199" width="1" height="12" fill="#0447fe"/><rect x="979" y="199" width="2" height="12" fill="#0447fe"/><rect x="981" y="205" width="1" height="1" fill="#0447fe"/><rect x="982" y="199" width="5" height="12" fill="#0447fe"/><rect x="989" y="199" width="1" height="12" fill="#0447fe"/><rect x="991" y="199" width="3" height="12" fill="#0447fe"/><rect x="994" y="205" width="1" height="1" fill="#0447fe"/><rect x="995" y="199" width="3" height="12" fill="#0447fe"/><rect x="999" y="199" width="2" height="12" fill="#0447fe"/><rect x="1003" y="199" width="8" height="12" fill="#0447fe"/><rect x="1011" y="205" width="3" height="1" fill="#0447fe"/><rect x="1014" y="199" width="1" height="12" fill="#0447fe"/><rect x="1035" y="199" width="1" height="12" fill="#0447fe"/><rect x="1" y="216" width="1" height="12" fill="#0447fe"/><rect x="179" y="216" width="1" height="12" fill="#0447fe"/><rect x="228" y="216" width="1" height="12" fill="#0447fe"/><rect x="245" y="216" width="1" height="12" fill="#0447fe"/><rect x="248" y="216" width="1" height="12" fill="#0447fe"/><rect x="251" y="216" width="1" height="12" fill="#0447fe"/><rect x="317" y="216" width="1" height="12" fill="#0447fe"/><rect x="334" y="216" width="1" height="12" fill="#0447fe"/><rect x="348" y="216" width="2" height="12" fill="#0447fe"/><rect x="355" y="216" width="1" height="12" fill="#0447fe"/><rect x="368" y="216" width="1" height="12" fill="#0447fe"/><rect x="486" y="216" width="1" height="12" fill="#0447fe"/><rect x="489" y="216" width="1" height="12" fill="#0447fe"/><rect x="533" y="216" width="1" height="12" fill="#0447fe"/><rect x="599" y="216" width="1" height="12" fill="#0447fe"/><rect x="741" y="216" width="2" height="12" fill="#0447fe"/><rect x="822" y="216" width="1" height="12" fill="#0447fe"/><rect x="827" y="216" width="2" height="12" fill="#0447fe"/><rect x="830" y="216" width="2" height="12" fill="#0447fe"/><rect x="840" y="216" width="1" height="12" fill="#0447fe"/><rect x="847" y="216" width="4" height="12" fill="#0447fe"/><rect x="856" y="216" width="1" height="12" fill="#0447fe"/><rect x="913" y="216" width="1" height="12" fill="#0447fe"/><rect x="989" y="216" width="1" height="12" fill="#0447fe"/><rect x="228" y="234" width="1" height="12" fill="#0447fe"/><rect x="248" y="234" width="1" height="12" fill="#0447fe"/><rect x="251" y="234" width="1" height="12" fill="#0447fe"/><rect x="317" y="234" width="1" height="12" fill="#0447fe"/><rect x="348" y="234" width="2" height="12" fill="#0447fe"/><rect x="355" y="234" width="1" height="12" fill="#0447fe"/><rect x="368" y="234" width="1" height="12" fill="#0447fe"/><rect x="486" y="234" width="1" height="12" fill="#0447fe"/><rect x="489" y="234" width="1" height="12" fill="#0447fe"/><rect x="533" y="234" width="1" height="12" fill="#0447fe"/><rect x="599" y="234" width="1" height="12" fill="#0447fe"/><rect x="741" y="234" width="1" height="12" fill="#0447fe"/><rect x="822" y="234" width="1" height="12" fill="#0447fe"/><rect x="830" y="234" width="2" height="12" fill="#0447fe"/><rect x="847" y="234" width="2" height="12" fill="#0447fe"/><rect x="913" y="234" width="1" height="12" fill="#0447fe"/><rect x="1" y="251" width="1" height="12" fill="#0447fe"/><rect x="17" y="251" width="1" height="12" fill="#0447fe"/><rect x="135" y="251" width="1" height="12" fill="#0447fe"/><rect x="136" y="257" width="1" height="1" fill="#0447fe"/><rect x="137" y="251" width="2" height="12" fill="#0447fe"/><rect x="140" y="251" width="1" height="12" fill="#0447fe"/><rect x="148" y="251" width="6" height="12" fill="#0447fe"/><rect x="161" y="251" width="1" height="12" fill="#0447fe"/><rect x="169" y="251" width="1" height="12" fill="#0447fe"/><rect x="171" y="251" width="1" height="12" fill="#0447fe"/><rect x="175" y="251" width="2" height="12" fill="#0447fe"/><rect x="179" y="251" width="1" height="12" fill="#0447fe"/><rect x="184" y="251" width="1" height="12" fill="#0447fe"/><rect x="190" y="251" width="7" height="12" fill="#0447fe"/><rect x="198" y="251" width="11" height="12" fill="#0447fe"/><rect x="210" y="251" width="5" height="12" fill="#0447fe"/><rect x="215" y="257" width="1" height="1" fill="#0447fe"/><rect x="216" y="251" width="2" height="12" fill="#0447fe"/><rect x="228" y="251" width="1" height="12" fill="#0447fe"/><rect x="230" y="251" width="1" height="12" fill="#0447fe"/><rect x="232" y="251" width="2" height="12" fill="#0447fe"/><rect x="234" y="257" width="1" height="1" fill="#0447fe"/><rect x="235" y="251" width="9" height="12" fill="#0447fe"/><rect x="245" y="251" width="1" height="12" fill="#0447fe"/><rect x="248" y="251" width="1" height="12" fill="#0447fe"/><rect x="251" y="251" width="1" height="12" fill="#0447fe"/><rect x="254" y="251" width="2" height="12" fill="#0447fe"/><rect x="257" y="251" width="1" height="12" fill="#0447fe"/><rect x="259" y="251" width="1" height="12" fill="#0447fe"/><rect x="289" y="251" width="1" height="12" fill="#0447fe"/><rect x="297" y="251" width="6" height="12" fill="#0447fe"/><rect x="303" y="257" width="1" height="1" fill="#0447fe"/><rect x="304" y="251" width="2" height="12" fill="#0447fe"/><rect x="317" y="251" width="1" height="12" fill="#0447fe"/><rect x="334" y="251" width="1" height="12" fill="#0447fe"/><rect x="348" y="251" width="2" height="12" fill="#0447fe"/><rect x="351" y="251" width="1" height="12" fill="#0447fe"/><rect x="355" y="251" width="1" height="12" fill="#0447fe"/><rect x="361" y="251" width="3" height="12" fill="#0447fe"/><rect x="365" y="251" width="2" height="12" fill="#0447fe"/><rect x="368" y="251" width="4" height="12" fill="#0447fe"/><rect x="384" y="251" width="1" height="12" fill="#0447fe"/><rect x="395" y="251" width="3" height="12" fill="#0447fe"/><rect x="409" y="251" width="2" height="12" fill="#0447fe"/><rect x="429" y="251" width="1" height="12" fill="#0447fe"/><rect x="430" y="257" width="2" height="1" fill="#0447fe"/><rect x="432" y="251" width="1" height="12" fill="#0447fe"/><rect x="434" y="251" width="1" height="12" fill="#0447fe"/><rect x="486" y="251" width="3" height="12" fill="#0447fe"/><rect x="490" y="251" width="2" height="12" fill="#0447fe"/><rect x="503" y="251" width="2" height="12" fill="#0447fe"/><rect x="515" y="251" width="3" height="12" fill="#0447fe"/><rect x="533" y="251" width="1" height="12" fill="#0447fe"/><rect x="537" y="251" width="9" height="12" fill="#0447fe"/><rect x="547" y="251" width="3" height="12" fill="#0447fe"/><rect x="561" y="251" width="1" height="12" fill="#0447fe"/><rect x="575" y="251" width="2" height="12" fill="#0447fe"/><rect x="588" y="251" width="1" height="12" fill="#0447fe"/><rect x="596" y="251" width="2" height="12" fill="#0447fe"/><rect x="599" y="251" width="2" height="12" fill="#0447fe"/><rect x="601" y="257" width="1" height="1" fill="#0447fe"/><rect x="602" y="251" width="4" height="12" fill="#0447fe"/><rect x="622" y="251" width="1" height="12" fill="#0447fe"/><rect x="624" y="251" width="1" height="12" fill="#0447fe"/><rect x="622" y="257" width="6" height="1" fill="#0447fe"/><rect x="628" y="251" width="1" height="12" fill="#0447fe"/><rect x="635" y="251" width="3" height="12" fill="#0447fe"/><rect x="638" y="257" width="20" height="1" fill="#0447fe"/><rect x="640" y="251" width="1" height="12" fill="#0447fe"/><rect x="642" y="251" width="5" height="12" fill="#0447fe"/><rect x="650" y="251" width="2" height="12" fill="#0447fe"/><rect x="656" y="251" width="1" height="12" fill="#0447fe"/><rect x="658" y="251" width="2" height="12" fill="#0447fe"/><rect x="679" y="251" width="4" height="12" fill="#0447fe"/><rect x="683" y="257" width="1" height="1" fill="#0447fe"/><rect x="684" y="251" width="1" height="12" fill="#0447fe"/><rect x="725" y="251" width="2" height="12" fill="#0447fe"/><rect x="729" y="251" width="1" height="12" fill="#0447fe"/><rect x="731" y="251" width="7" height="12" fill="#0447fe"/><rect x="738" y="257" width="1" height="1" fill="#0447fe"/><rect x="739" y="251" width="1" height="12" fill="#0447fe"/><rect x="741" y="251" width="2" height="12" fill="#0447fe"/><rect x="745" y="251" width="1" height="12" fill="#0447fe"/><rect x="759" y="251" width="2" height="12" fill="#0447fe"/><rect x="767" y="251" width="2" height="12" fill="#0447fe"/><rect x="773" y="251" width="1" height="12" fill="#0447fe"/><rect x="780" y="251" width="1" height="12" fill="#0447fe"/><rect x="783" y="251" width="4" height="12" fill="#0447fe"/><rect x="787" y="257" width="7" height="1" fill="#0447fe"/><rect x="788" y="251" width="1" height="12" fill="#0447fe"/><rect x="790" y="251" width="1" height="12" fill="#0447fe"/><rect x="792" y="251" width="1" height="12" fill="#0447fe"/><rect x="794" y="251" width="2" height="12" fill="#0447fe"/><rect x="806" y="251" width="1" height="12" fill="#0447fe"/><rect x="807" y="257" width="4" height="1" fill="#0447fe"/><rect x="808" y="251" width="2" height="12" fill="#0447fe"/><rect x="811" y="251" width="7" height="12" fill="#0447fe"/><rect x="819" y="251" width="1" height="12" fill="#0447fe"/><rect x="822" y="251" width="1" height="12" fill="#0447fe"/><rect x="827" y="251" width="2" height="12" fill="#0447fe"/><rect x="830" y="251" width="2" height="12" fill="#0447fe"/><rect x="836" y="251" width="1" height="12" fill="#0447fe"/><rect x="839" y="251" width="3" height="12" fill="#0447fe"/><rect x="843" y="251" width="3" height="12" fill="#0447fe"/><rect x="847" y="251" width="4" height="12" fill="#0447fe"/><rect x="856" y="251" width="1" height="12" fill="#0447fe"/><rect x="905" y="251" width="1" height="12" fill="#0447fe"/><rect x="906" y="257" width="5" height="1" fill="#0447fe"/><rect x="907" y="251" width="3" height="12" fill="#0447fe"/><rect x="911" y="251" width="5" height="12" fill="#0447fe"/><rect x="917" y="251" width="1" height="12" fill="#0447fe"/><rect x="932" y="251" width="1" height="12" fill="#0447fe"/><rect x="933" y="257" width="1" height="1" fill="#0447fe"/><rect x="934" y="251" width="5" height="12" fill="#0447fe"/><rect x="944" y="251" width="1" height="12" fill="#0447fe"/><rect x="974" y="251" width="1" height="12" fill="#0447fe"/><rect x="979" y="251" width="2" height="12" fill="#0447fe"/><rect x="981" y="257" width="1" height="1" fill="#0447fe"/><rect x="982" y="251" width="5" height="12" fill="#0447fe"/><rect x="989" y="251" width="1" height="12" fill="#0447fe"/><rect x="991" y="251" width="3" height="12" fill="#0447fe"/><rect x="994" y="257" width="1" height="1" fill="#0447fe"/><rect x="995" y="251" width="3" height="12" fill="#0447fe"/><rect x="999" y="251" width="2" height="12" fill="#0447fe"/><rect x="1003" y="251" width="8" height="12" fill="#0447fe"/><rect x="1011" y="257" width="3" height="1" fill="#0447fe"/><rect x="1014" y="251" width="1" height="12" fill="#0447fe"/><rect x="1035" y="251" width="1" height="12" fill="#0447fe"/><rect x="1" y="281" width="1" height="12" fill="#0447fe"/><rect x="179" y="281" width="1" height="12" fill="#0447fe"/><rect x="228" y="281" width="1" height="12" fill="#0447fe"/><rect x="245" y="281" width="1" height="12" fill="#0447fe"/><rect x="248" y="281" width="1" height="12" fill="#0447fe"/><rect x="251" y="281" width="1" height="12" fill="#0447fe"/><rect x="317" y="281" width="1" height="12" fill="#0447fe"/><rect x="334" y="281" width="1" height="12" fill="#0447fe"/><rect x="348" y="281" width="2" height="12" fill="#0447fe"/><rect x="355" y="281" width="1" height="12" fill="#0447fe"/><rect x="368" y="281" width="1" height="12" fill="#0447fe"/><rect x="486" y="281" width="1" height="12" fill="#0447fe"/><rect x="489" y="281" width="1" height="12" fill="#0447fe"/><rect x="533" y="281" width="1" height="12" fill="#0447fe"/><rect x="599" y="281" width="1" height="12" fill="#0447fe"/><rect x="741" y="281" width="2" height="12" fill="#0447fe"/><rect x="822" y="281" width="1" height="12" fill="#0447fe"/><rect x="827" y="281" width="2" height="12" fill="#0447fe"/><rect x="830" y="281" width="2" height="12" fill="#0447fe"/><rect x="840" y="281" width="1" height="12" fill="#0447fe"/><rect x="847" y="281" width="4" height="12" fill="#0447fe"/><rect x="856" y="281" width="1" height="12" fill="#0447fe"/><rect x="913" y="281" width="1" height="12" fill="#0447fe"/><rect x="989" y="281" width="1" height="12" fill="#0447fe"/><rect x="228" y="311" width="1" height="12" fill="#0447fe"/><rect x="248" y="311" width="1" height="12" fill="#0447fe"/><rect x="251" y="311" width="1" height="12" fill="#0447fe"/><rect x="317" y="311" width="1" height="12" fill="#0447fe"/><rect x="348" y="311" width="2" height="12" fill="#0447fe"/><rect x="355" y="311" width="1" height="12" fill="#0447fe"/><rect x="368" y="311" width="1" height="12" fill="#0447fe"/><rect x="486" y="311" width="1" height="12" fill="#0447fe"/><rect x="489" y="311" width="1" height="12" fill="#0447fe"/><rect x="599" y="311" width="1" height="12" fill="#0447fe"/><rect x="741" y="311" width="1" height="12" fill="#0447fe"/><rect x="822" y="311" width="1" height="12" fill="#0447fe"/><rect x="830" y="311" width="2" height="12" fill="#0447fe"/><rect x="847" y="311" width="2" height="12" fill="#0447fe"/><rect x="913" y="311" width="1" height="12" fill="#0447fe"/><rect x="5.5" y="6.0" width="10" height="10" fill="#fff" stroke="#000" stroke-width="1.2"/><rect x="7" y="10.5" width="7" height="1.2" fill="#000"/><rect x="5.5" y="94.5" width="10" height="10" fill="#fff" stroke="#000" stroke-width="1.2"/><rect x="7" y="99" width="7" height="1.2" fill="#000"/><rect x="5.5" y="201.8" width="10" height="10" fill="#fff" stroke="#000" stroke-width="1.2"/><rect x="7" y="206.3" width="7" height="1.2" fill="#000"/><rect x="5.5" y="253.7" width="10" height="10" fill="#fff" stroke="#000" stroke-width="1.2"/><rect x="7" y="258.2" width="7" height="1.2" fill="#000"/><rect x="0.5" y="168.9" width="1035.2" height="2.2" fill="#000"/><rect x="6" y="167.9" width="1" height="1.5" fill="#000"/><rect x="20" y="167.9" width="1" height="1.5" fill="#000"/><rect x="35" y="167.9" width="1" height="1.5" fill="#000"/><rect x="50" y="167.9" width="1" height="1.5" fill="#000"/><rect x="65" y="167.9" width="1" height="1.5" fill="#000"/><rect x="80" y="167.9" width="1" height="1.5" fill="#000"/><rect x="95" y="167.3" width="2" height="5.4" fill="#000"/><rect x="110" y="167.9" width="1" height="1.5" fill="#000"/><rect x="125" y="167.9" width="1" height="1.5" fill="#000"/><rect x="140" y="167.9" width="1" height="1.5" fill="#000"/><rect x="155" y="167.9" width="1" height="1.5" fill="#000"/><rect x="170" y="167.9" width="1" height="1.5" fill="#000"/><rect x="185" y="167.9" width="1" height="1.5" fill="#000"/><rect x="200" y="167.9" width="1" height="1.5" fill="#000"/><rect x="215" y="167.9" width="1" height="1.5" fill="#000"/><rect x="230" y="167.9" width="1" height="1.5" fill="#000"/><rect x="244" y="167.3" width="2" height="5.4" fill="#000"/><rect x="260" y="167.9" width="1" height="1.5" fill="#000"/><rect x="275" y="167.9" width="1" height="1.5" fill="#000"/><rect x="289" y="167.9" width="1" height="1.5" fill="#000"/><rect x="304" y="167.9" width="1" height="1.5" fill="#000"/><rect x="319" y="167.9" width="1" height="1.5" fill="#000"/><rect x="334" y="167.9" width="1" height="1.5" fill="#000"/><rect x="349" y="167.9" width="1" height="1.5" fill="#000"/><rect x="364" y="167.9" width="1" height="1.5" fill="#000"/><rect x="379" y="167.9" width="1" height="1.5" fill="#000"/><rect x="394" y="167.3" width="2" height="5.4" fill="#000"/><rect x="409" y="167.9" width="1" height="1.5" fill="#000"/><rect x="424" y="167.9" width="1" height="1.5" fill="#000"/><rect x="439" y="167.9" width="1" height="1.5" fill="#000"/><rect x="454" y="167.9" width="1" height="1.5" fill="#000"/><rect x="469" y="167.9" width="1" height="1.5" fill="#000"/><rect x="484" y="167.9" width="1" height="1.5" fill="#000"/><rect x="499" y="167.9" width="1" height="1.5" fill="#000"/><rect x="514" y="167.9" width="1" height="1.5" fill="#000"/><rect x="529" y="167.9" width="1" height="1.5" fill="#000"/><rect x="543" y="167.3" width="2" height="5.4" fill="#000"/><rect x="558" y="167.9" width="1" height="1.5" fill="#000"/><rect x="573" y="167.9" width="1" height="1.5" fill="#000"/><rect x="588" y="167.9" width="1" height="1.5" fill="#000"/><rect x="603" y="167.9" width="1" height="1.5" fill="#000"/><rect x="618" y="167.9" width="1" height="1.5" fill="#000"/><rect x="633" y="167.9" width="1" height="1.5" fill="#000"/><rect x="648" y="167.9" width="1" height="1.5" fill="#000"/><rect x="663" y="167.9" width="1" height="1.5" fill="#000"/><rect x="678" y="167.9" width="1" height="1.5" fill="#000"/><rect x="692" y="167.3" width="2" height="5.4" fill="#000"/><rect x="708" y="167.9" width="1" height="1.5" fill="#000"/><rect x="723" y="167.9" width="1" height="1.5" fill="#000"/><rect x="738" y="167.9" width="1" height="1.5" fill="#000"/><rect x="753" y="167.9" width="1" height="1.5" fill="#000"/><rect x="768" y="167.9" width="1" height="1.5" fill="#000"/><rect x="783" y="167.9" width="1" height="1.5" fill="#000"/><rect x="798" y="167.9" width="1" height="1.5" fill="#000"/><rect x="813" y="167.9" width="1" height="1.5" fill="#000"/><rect x="828" y="167.9" width="1" height="1.5" fill="#000"/><rect x="842" y="167.3" width="2" height="5.4" fill="#000"/><rect x="857" y="167.9" width="1" height="1.5" fill="#000"/><rect x="872" y="167.9" width="1" height="1.5" fill="#000"/><rect x="887" y="167.9" width="1" height="1.5" fill="#000"/><rect x="902" y="167.9" width="1" height="1.5" fill="#000"/><rect x="917" y="167.9" width="1" height="1.5" fill="#000"/><rect x="932" y="167.9" width="1" height="1.5" fill="#000"/><rect x="947" y="167.9" width="1" height="1.5" fill="#000"/><rect x="962" y="167.9" width="1" height="1.5" fill="#000"/><rect x="977" y="167.9" width="1" height="1.5" fill="#000"/><rect x="991" y="167.3" width="2" height="5.4" fill="#000"/><rect x="1007" y="167.9" width="1" height="1.5" fill="#000"/><rect x="1022" y="167.9" width="1" height="1.5" fill="#000"/><text x="-54.0" y="165.2" font-family="'Liberation Mono',monospace" font-weight="bold" font-size="13.6" textLength="69.1" lengthAdjust="spacingAndGlyphs" fill="#000" stroke="#000" stroke-width="0.45">45,000,000</text><text x="95.4" y="165.2" font-family="'Liberation Mono',monospace" font-weight="bold" font-size="13.6" textLength="69.1" lengthAdjust="spacingAndGlyphs" fill="#000" stroke="#000" stroke-width="0.45">50,000,000</text><text x="244.8" y="165.2" font-family="'Liberation Mono',monospace" font-weight="bold" font-size="13.6" textLength="69.1" lengthAdjust="spacingAndGlyphs" fill="#000" stroke="#000" stroke-width="0.45">55,000,000</text><text x="394.3" y="165.2" font-family="'Liberation Mono',monospace" font-weight="bold" font-size="13.6" textLength="69.1" lengthAdjust="spacingAndGlyphs" fill="#000" stroke="#000" stroke-width="0.45">60,000,000</text><text x="543.8" y="165.2" font-family="'Liberation Mono',monospace" font-weight="bold" font-size="13.6" textLength="69.1" lengthAdjust="spacingAndGlyphs" fill="#000" stroke="#000" stroke-width="0.45">65,000,000</text><text x="693.2" y="165.2" font-family="'Liberation Mono',monospace" font-weight="bold" font-size="13.6" textLength="69.1" lengthAdjust="spacingAndGlyphs" fill="#000" stroke="#000" stroke-width="0.45">70,000,000</text><text x="842.7" y="165.2" font-family="'Liberation Mono',monospace" font-weight="bold" font-size="13.6" textLength="69.1" lengthAdjust="spacingAndGlyphs" fill="#000" stroke="#000" stroke-width="0.45">75,000,000</text><text x="992.1" y="165.2" font-family="'Liberation Mono',monospace" font-weight="bold" font-size="13.6" textLength="41.5" lengthAdjust="spacingAndGlyphs" fill="#000" stroke="#000" stroke-width="0.45">80,000</text><rect x="505" y="0" width="1" height="337.6" fill="#bdbdbd"/><rect x="470" y="311" width="72" height="13" fill="#c4c4c4"/><rect x="505" y="311" width="1" height="13" fill="#adadad"/></svg>
<span class="t" style="left:684.50px;top:484.40px;height:16px;line-height:16px;font-size:12.5px;color:#111;font-family:'Liberation Sans',sans-serif;letter-spacing:0.725px;">63,734,072</span>
<div style="left:669px;top:530px;width:5.8px;height:5.8px;background:#e4e4e4;border-radius:50%;"></div>
<div style="left:86px;top:553.5px;width:1173px;height:214.5px;background:#e6e6e6;border-radius:5px;border:1px solid #dddddd;"></div>
<div style="left:246.2px;top:541px;width:853px;height:22px;background:#e0e0e0;border-radius:6px;border:1px solid #d2d2d2;"></div>
<div style="left:288px;top:541.8px;width:97px;height:20.6px;background:#fff;border-radius:5.5px;box-shadow:0 0.5px 1.2px rgba(0,0,0,.3);"></div>
<span class="t" style="left:299.80px;top:543.10px;height:17px;line-height:17px;font-size:13px;color:#1a1a1a;font-family:'Liberation Sans',sans-serif;letter-spacing:0.267px;">Data Access</span>
<span class="t" style="left:399.10px;top:543.10px;height:17px;line-height:17px;font-size:13px;color:#1a1a1a;font-family:'Liberation Sans',sans-serif;letter-spacing:0.713px;">Annotation</span>
<span class="t" style="left:492.30px;top:543.10px;height:17px;line-height:17px;font-size:13px;color:#1a1a1a;font-family:'Liberation Sans',sans-serif;letter-spacing:-0.047px;">Graph</span>
<span class="t" style="left:552.10px;top:543.10px;height:17px;line-height:17px;font-size:13px;color:#1a1a1a;font-family:'Liberation Sans',sans-serif;letter-spacing:0.185px;">Advanced Search</span>
<span class="t" style="left:681.30px;top:543.10px;height:17px;line-height:17px;font-size:13px;color:#1a1a1a;font-family:'Liberation Sans',sans-serif;letter-spacing:0.494px;">Selection Info</span>
<span class="t" style="left:790.30px;top:543.10px;height:17px;line-height:17px;font-size:13px;color:#1a1a1a;font-family:'Liberation Sans',sans-serif;letter-spacing:0.248px;">Sliced View</span>
<span class="t" style="left:884.30px;top:543.10px;height:17px;line-height:17px;font-size:13px;color:#1a1a1a;font-family:'Liberation Sans',sans-serif;letter-spacing:0.003px;">Log</span>
<span class="t" style="left:929.30px;top:543.10px;height:17px;line-height:17px;font-size:13px;color:#1a1a1a;font-family:'Liberation Sans',sans-serif;letter-spacing:0.342px;">External View</span>
<span class="t" style="left:1036.20px;top:543.10px;height:17px;line-height:17px;font-size:13px;color:#1a1a1a;font-family:'Liberation Sans',sans-serif;letter-spacing:0.366px;">Plug–ins</span>
<div style="left:478.7px;top:546px;width:1px;height:11px;background:#c9c9c9;"></div>
<div style="left:538.8px;top:546px;width:1px;height:11px;background:#c9c9c9;"></div>
<div style="left:667.5px;top:546px;width:1px;height:11px;background:#c9c9c9;"></div>
<div style="left:777.3px;top:546px;width:1px;height:11px;background:#c9c9c9;"></div>
<div style="left:871.3px;top:546px;width:1px;height:11px;background:#c9c9c9;"></div>
<div style="left:916.8px;top:546px;width:1px;height:11px;background:#c9c9c9;"></div>
<div style="left:1023.2px;top:546px;width:1px;height:11px;background:#c9c9c9;"></div>
<svg style="left:257px;top:543px" width="18" height="17" viewBox="0 0 18 17"><path d="M3.6 4.4 L9 9.4 L14.4 4.4" fill="none" stroke="#3a96cc" stroke-width="2.8" stroke-linecap="butt" stroke-linejoin="miter"/><rect x="3.4" y="14" width="11" height="0.8" fill="#c0c0c0"/></svg>
<div style="left:89px;top:570px;width:1168px;height:195px;border:1px solid #8a8a8a;border-top-color:#6c6c6c;border-left-color:#6c6c6c;background:#ececec;"></div>
<div style="left:90px;top:571px;width:1166px;height:193px;border:1px solid #fafafa;"></div>
<div style="left:93px;top:580px;width:263px;height:180.5px;border:1px solid #b4b4b4;"></div>
<div style="left:98.5px;top:573px;width:176px;height:15px;background:#ececec;"></div>
<span class="t" style="left:100.00px;top:573.00px;height:17px;line-height:17px;font-size:13px;color:#000;font-family:'Liberation Sans',sans-serif;letter-spacing:0.421px;">Available Data – </span>
<span class="t" style="left:205.20px;top:573.00px;height:17px;line-height:17px;font-size:13px;color:#0000e6;font-family:'Liberation Sans',sans-serif;font-weight:bold;letter-spacing:0.557px;text-decoration:underline;">Configure</span>
<div style="left:97px;top:594px;width:257.5px;height:164px;background:#fff;border:1px solid #6aa4ea;border-left-color:#5a5a5a;box-shadow:0 0 0 1px #cfe0f6;"></div>
<div style="left:98.5px;top:595px;width:254.5px;height:162px;overflow:hidden;"><div style="left:62.5px;top:20.3px;width:175px;height:18.7px;background:#0a48dc;"></div><div style="left:64.8px;top:22.6px;width:13.5px;height:13.4px;background:#2e7cf6;border-radius:3.5px;"></div><div style="left:64.8px;top:41.6px;width:13.5px;height:13.4px;background:#fff;border-radius:3.5px;border:1px solid #c3c3c3;"></div><div style="left:64.8px;top:60.6px;width:13.5px;height:13.4px;background:#fff;border-radius:3.5px;border:1px solid #c3c3c3;"></div><div style="left:64.8px;top:79.6px;width:13.5px;height:13.4px;background:#fff;border-radius:3.5px;border:1px solid #c3c3c3;"></div><div style="left:64.8px;top:98.6px;width:13.5px;height:13.4px;background:#fff;border-radius:3.5px;border:1px solid #c3c3c3;"></div><div style="left:64.8px;top:117.6px;width:13.5px;height:13.4px;background:#fff;border-radius:3.5px;border:1px solid #c3c3c3;"></div><div style="left:64.8px;top:136.6px;width:13.5px;height:13.4px;background:#fff;border-radius:3.5px;border:1px solid #c3c3c3;"></div><div style="left:237.5px;top:0px;width:17.5px;height:147px;background:#fdfdfd;"></div><div style="left:241.8px;top:18.9px;width:7.3px;height:17.6px;background:#c1c1c1;border-radius:4px;"></div><div style="left:0px;top:146.3px;width:238px;height:16px;background:#fafafa;"></div><div style="left:1.5px;top:150.5px;width:120.5px;height:7px;background:#c1c1c1;border-radius:4px;"></div><div style="left:237.5px;top:146.3px;width:17.5px;height:16px;background:#fff;"></div></div>
<svg style="left:141px;top:598px" width="17" height="14" viewBox="0 0 17 14"><path d="M0.5 2.2 Q0.5 1 1.7 1 H5.6 L7 2.6 H15 Q16 2.6 16 3.6 V12 Q16 13 15 13 H1.5 Q0.5 13 0.5 12 Z" fill="#4aa7e8"/><path d="M0.5 4.6 H16 V12 Q16 13 15 13 H1.5 Q0.5 13 0.5 12 Z" fill="#7cc5f5"/><path d="M0.5 4.6 H16" stroke="#a9dbfa" stroke-width="0.8"/></svg>
<svg style="left:123.2px;top:602.6px" width="11" height="8" viewBox="0 0 11 8"><path d="M1.6 1.5 L5.5 5.6 L9.4 1.5" fill="none" stroke="#b0b0b0" stroke-width="1.3" stroke-linecap="round" stroke-linejoin="round"/></svg>
<svg style="left:163.5px;top:617.8px" width="13" height="13" viewBox="0 0 13 13"><path d="M2.6 7 L5.6 10.2 L10.8 2.8" fill="none" stroke="#fff" stroke-width="2" stroke-linecap="round" stroke-linejoin="round"/></svg>
<span class="t" style="left:161.40px;top:598.00px;height:16px;line-height:16px;font-size:12.5px;color:#000;font-family:'Liberation Sans',sans-serif;letter-spacing:-0.088px;">genePred</span>
<div style="left:98.5px;top:595px;width:237.5px;height:146.3px;overflow:hidden;">
<span class="t" style="left:84.70px;top:22.00px;height:16px;line-height:16px;font-size:12.5px;color:#fff;font-family:'Liberation Sans',sans-serif;letter-spacing:-0.372px;">AUGUSTUS (augustusGene)</span>
<span class="t" style="left:84.70px;top:41.00px;height:16px;line-height:16px;font-size:12.5px;color:#111;font-family:'Liberation Sans',sans-serif;letter-spacing:-0.095px;">Genscan Genes (genscan)</span>
<span class="t" style="left:84.70px;top:60.00px;height:16px;line-height:16px;font-size:12.5px;color:#111;font-family:'Liberation Sans',sans-serif;letter-spacing:-0.183px;">RefSeq Select (ncbiRefSeqSelect)</span>
<span class="t" style="left:84.70px;top:79.00px;height:16px;line-height:16px;font-size:12.5px;color:#111;font-family:'Liberation Sans',sans-serif;letter-spacing:-0.307px;">UCSC RefSeq (refGene)</span>
<span class="t" style="left:84.70px;top:98.00px;height:16px;line-height:16px;font-size:12.5px;color:#111;font-family:'Liberation Sans',sans-serif;letter-spacing:-0.052px;">RefSeq Predicted (ncbiRefSeqPredicted)</span>
<span class="t" style="left:84.70px;top:117.00px;height:16px;line-height:16px;font-size:12.5px;color:#111;font-family:'Liberation Sans',sans-serif;letter-spacing:-0.112px;">RefSeq Curated (ncbiRefSeqCurated)</span>
<span class="t" style="left:84.70px;top:136.00px;height:16px;line-height:16px;font-size:12.5px;color:#111;font-family:'Liberation Sans',sans-serif;letter-spacing:-0.078px;">RefSeq All (ncbiRefSeq)</span>
</div>
<div style="left:358.6px;top:663px;width:8.4px;height:10px;background:#fff;border-top:1px solid #d2d2d2;border-bottom:1px solid #d2d2d2;"></div>
<div style="left:360.1px;top:665.1px;width:5.8px;height:5.8px;background:#e5e5e5;border-radius:50%;"></div>
<div style="left:370px;top:580px;width:882.5px;height:180.5px;border:1px solid #b4b4b4;"></div>
<div style="left:375px;top:573px;width:155px;height:15px;background:#ececec;"></div>
<span class="t" style="left:377.50px;top:572.50px;height:17px;line-height:17px;font-size:13px;color:#000;font-family:'Liberation Sans',sans-serif;letter-spacing:0.433px;">Data Management Table</span>
<div style="left:374px;top:590px;width:875px;height:167px;background:#fff;border:1px solid #9c9c9c;border-top-color:#7a7a7a;overflow:hidden;"></div>
<div style="left:376px;top:592px;width:871px;height:16px;background:linear-gradient(#e9e9e9,#f0f0f0 45%,#f7f7f7);"></div>
<div style="left:1247px;top:592px;width:1px;height:164px;background:#c4c4c4;"></div>
<div style="left:376px;top:608px;width:871px;height:1.2px;background:#000;"></div>
<div style="left:395px;top:592px;width:1px;height:164px;background:#b4b4b4;"></div>
<div style="left:419px;top:592px;width:1px;height:164px;background:#b4b4b4;"></div>
<div style="left:446.4px;top:592px;width:1px;height:164px;background:#b4b4b4;"></div>
<div style="left:475.4px;top:592px;width:1px;height:164px;background:#b4b4b4;"></div>
<div style="left:510.4px;top:592px;width:1px;height:164px;background:#b4b4b4;"></div>
<div style="left:630.4px;top:592px;width:1px;height:164px;background:#b4b4b4;"></div>
<div style="left:1231.3px;top:592px;width:1px;height:164px;background:#b4b4b4;"></div>
<div style="left:375px;top:628px;width:872px;height:1px;background:#b4b4b4;"></div>
<div style="left:375px;top:648px;width:872px;height:1px;background:#b4b4b4;"></div>
<div style="left:375px;top:668px;width:872px;height:1px;background:#b4b4b4;"></div>
<div style="left:375px;top:688px;width:872px;height:1px;background:#b4b4b4;"></div>
<div style="left:375px;top:708px;width:872px;height:1px;background:#b4b4b4;"></div>
<div style="left:375px;top:728px;width:872px;height:1px;background:#b4b4b4;"></div>
<div style="left:375px;top:748px;width:872px;height:1px;background:#b4b4b4;"></div>
<span class="t" style="left:425.55px;top:591.70px;height:16px;line-height:16px;font-size:12px;color:#000;font-family:'Liberation Sans',sans-serif;font-weight:bold;letter-spacing:-0.882px;">FG</span>
<span class="t" style="left:453.65px;top:591.70px;height:16px;line-height:16px;font-size:12px;color:#000;font-family:'Liberation Sans',sans-serif;font-weight:bold;letter-spacing:-1.150px;">BG</span>
<span class="t" style="left:481.90px;top:591.70px;height:16px;line-height:16px;font-size:12px;color:#000;font-family:'Liberation Sans',sans-serif;font-weight:bold;letter-spacing:2.061px;">+/–</span>
<span class="t" style="left:537.35px;top:591.70px;height:16px;line-height:16px;font-size:12px;color:#000;font-family:'Liberation Sans',sans-serif;font-weight:bold;letter-spacing:0.441px;">Load Mode</span>
<span class="t" style="left:894.80px;top:591.70px;height:16px;line-height:16px;font-size:12px;color:#000;font-family:'Liberation Sans',sans-serif;font-weight:bold;letter-spacing:0.562px;">Track Name</span>
<div style="left:421px;top:610px;width:24px;height:17px;background:#0447fe;"></div>
<div style="left:486px;top:611.4px;width:13.4px;height:13.4px;background:#fff;border:1px solid #c6c6c6;border-radius:3.5px;"></div>
<span class="t" style="left:519.40px;top:610.90px;height:17px;line-height:17px;font-size:13px;color:#000;font-family:'Liberation Sans',sans-serif;letter-spacing:0.127px;">Manual</span>
<svg style="left:565.5px;top:613.1px" width="9" height="13" viewBox="0 0 9 13"><path d="M1.4 4.6 L4.5 1.6 L7.6 4.6 M1.4 8.2 L4.5 11.2 L7.6 8.2" fill="none" stroke="#222" stroke-width="1.3" stroke-linecap="round" stroke-linejoin="round"/></svg>
<div style="left:631.8px;top:627.2px;width:599.5px;height:1.3px;background:#c4c4c4;"></div>
<span class="t" style="left:638.50px;top:610.90px;height:17px;line-height:17px;font-size:13px;color:#0f4bf0;font-family:'Liberation Sans',sans-serif;letter-spacing:0.369px;">augustusGene</span>
<svg style="left:1233px;top:612.1px" width="12" height="12" viewBox="0 0 12 12"><defs><linearGradient id="rx0" x1="0" y1="0" x2="0" y2="1"><stop offset="0" stop-color="#e8747a"/><stop offset="1" stop-color="#c81822"/></linearGradient></defs><path d="M1.6 1.4 L10.6 10.6 M10.6 1.4 L1.6 10.6" stroke="url(#rx0)" stroke-width="2" stroke-linecap="butt"/></svg>
<svg style="left:379.6px;top:611.8px" width="11.5" height="14" viewBox="0 0 14 17"><path d="M1 7.6 C1.6 3.6 6 1.6 9.4 3.6 L10.6 1.4 L13 7 L7 7.4 L8.4 5.4 C6 4 3.4 5.4 3 7.8 Z" fill="#2a6fd8"/><path d="M13 9.4 C12.4 13.4 8 15.4 4.6 13.4 L3.4 15.6 L1 10 L7 9.6 L5.6 11.6 C8 13 10.6 11.6 11 9.2 Z" fill="#2a8aee"/></svg>
<svg style="left:398.7px;top:612.0px" width="16" height="11" viewBox="0 0 17 11"><path d="M0.8 5.8 C3.5 1.4 13.5 1.4 16.2 5.8 C13.5 9.6 3.5 9.6 0.8 5.8 Z" fill="#f4f4f4" stroke="#777" stroke-width="0.8"/><path d="M0.6 5.4 C4 0.6 13 0.6 16.4 5.4" fill="none" stroke="#1a1a1a" stroke-width="1.6"/><circle cx="8.2" cy="5.4" r="3" fill="#1a1a1a"/><circle cx="7.2" cy="4.4" r="1" fill="#fff"/></svg>
<div style="left:421px;top:630px;width:24px;height:17px;background:#0447fe;"></div>
<div style="left:486px;top:631.4px;width:13.4px;height:13.4px;background:#fff;border:1px solid #c6c6c6;border-radius:3.5px;"></div>
<span class="t" style="left:519.40px;top:630.90px;height:17px;line-height:17px;font-size:13px;color:#000;font-family:'Liberation Sans',sans-serif;letter-spacing:0.127px;">Manual</span>
<svg style="left:565.5px;top:633.1px" width="9" height="13" viewBox="0 0 9 13"><path d="M1.4 4.6 L4.5 1.6 L7.6 4.6 M1.4 8.2 L4.5 11.2 L7.6 8.2" fill="none" stroke="#222" stroke-width="1.3" stroke-linecap="round" stroke-linejoin="round"/></svg>
<div style="left:631.8px;top:647.2px;width:599.5px;height:1.3px;background:#c4c4c4;"></div>
<span class="t" style="left:638.50px;top:630.90px;height:17px;line-height:17px;font-size:13px;color:#0f4bf0;font-family:'Liberation Sans',sans-serif;letter-spacing:-0.047px;">AUGUSTUS (augustusGene)</span>
<svg style="left:1233px;top:632.1px" width="12" height="12" viewBox="0 0 12 12"><defs><linearGradient id="rx1" x1="0" y1="0" x2="0" y2="1"><stop offset="0" stop-color="#e8747a"/><stop offset="1" stop-color="#c81822"/></linearGradient></defs><path d="M1.6 1.4 L10.6 10.6 M10.6 1.4 L1.6 10.6" stroke="url(#rx1)" stroke-width="2" stroke-linecap="butt"/></svg>
<svg style="left:379.6px;top:631.8px" width="11.5" height="14" viewBox="0 0 14 17"><path d="M1 7.6 C1.6 3.6 6 1.6 9.4 3.6 L10.6 1.4 L13 7 L7 7.4 L8.4 5.4 C6 4 3.4 5.4 3 7.8 Z" fill="#2a6fd8"/><path d="M13 9.4 C12.4 13.4 8 15.4 4.6 13.4 L3.4 15.6 L1 10 L7 9.6 L5.6 11.6 C8 13 10.6 11.6 11 9.2 Z" fill="#2a8aee"/></svg>
<svg style="left:398.7px;top:632.0px" width="16" height="11" viewBox="0 0 17 11"><path d="M0.8 5.8 C3.5 1.4 13.5 1.4 16.2 5.8 C13.5 9.6 3.5 9.6 0.8 5.8 Z" fill="#f4f4f4" stroke="#777" stroke-width="0.8"/><path d="M0.6 5.4 C4 0.6 13 0.6 16.4 5.4" fill="none" stroke="#1a1a1a" stroke-width="1.6"/><circle cx="8.2" cy="5.4" r="3" fill="#1a1a1a"/><circle cx="7.2" cy="4.4" r="1" fill="#fff"/></svg>
<div style="left:1271px;top:455px;width:8px;height:10px;background:#fff;border-top:1px solid #d2d2d2;border-bottom:1px solid #d2d2d2;"></div>
<div style="left:1272.1px;top:457.1px;width:5.8px;height:5.8px;background:#e5e5e5;border-radius:50%;"></div>
<div style="left:1287.5px;top:143.5px;width:157.5px;height:628.5px;background:#e4e4e4;border-radius:5px;"></div>
<div style="left:1292px;top:148px;width:138px;height:622.5px;background:#ececec;"></div>
<div style="left:1294px;top:154.5px;width:132.5px;height:43px;border:1px solid #b4b4b4;"></div>
<div style="left:1302px;top:148px;width:57px;height:14px;background:#ececec;"></div>
<span class="t" style="left:1305.00px;top:147.30px;height:17px;line-height:17px;font-size:13px;color:#0000e6;font-family:'Liberation Sans',sans-serif;font-weight:bold;letter-spacing:0.122px;text-decoration:underline;">Species</span>
<div style="left:1303px;top:170.3px;width:115px;height:19.5px;background:#fff;border-radius:5px;box-shadow:0 0.5px 1.5px rgba(0,0,0,.4);"></div>
<div style="left:1400px;top:171.8px;width:16px;height:16.5px;background:linear-gradient(#3f8ef8,#166af0);border-radius:4px;"></div>
<svg style="left:1400px;top:171.8px" width="16" height="16.5" viewBox="0 0 16 16.5"><path d="M5 6.6 L8 3.7 L11 6.6 M5 9.9 L8 12.8 L11 9.9" fill="none" stroke="#fff" stroke-width="1.5" stroke-linecap="round" stroke-linejoin="round"/></svg>
<span class="t" style="left:1311.40px;top:171.80px;height:17px;line-height:17px;font-size:13px;color:#000;font-family:'Liberation Sans',sans-serif;letter-spacing:0.475px;">Mus muscu...</span>
<div style="left:1294px;top:214px;width:132.5px;height:40.5px;border:1px solid #b4b4b4;"></div>
<div style="left:1299px;top:207px;width:106px;height:14px;background:#ececec;"></div>
<span class="t" style="left:1301.30px;top:206.50px;height:17px;line-height:17px;font-size:13px;color:#000;font-family:'Liberation Sans',sans-serif;letter-spacing:0.297px;">Genome Version</span>
<div style="left:1303px;top:227.6px;width:115px;height:19.5px;background:#fff;border-radius:5px;box-shadow:0 0.5px 1.5px rgba(0,0,0,.4);"></div>
<div style="left:1400px;top:229.1px;width:16px;height:16.5px;background:linear-gradient(#3f8ef8,#166af0);border-radius:4px;"></div>
<svg style="left:1400px;top:229.1px" width="16" height="16.5" viewBox="0 0 16 16.5"><path d="M5 6.6 L8 3.7 L11 6.6 M5 9.9 L8 12.8 L11 9.9" fill="none" stroke="#fff" stroke-width="1.5" stroke-linecap="round" stroke-linejoin="round"/></svg>
<span class="t" style="left:1311.40px;top:229.10px;height:17px;line-height:17px;font-size:13px;color:#000;font-family:'Liberation Sans',sans-serif;letter-spacing:0.475px;">M_musculu...</span>
<div style="left:1292px;top:264px;width:137.5px;height:506.5px;border:1px solid #9c9c9c;border-top-color:#707070;border-bottom:none;background:#fff;overflow:hidden;"><div style="left:0px;top:0px;width:136px;height:17px;background:linear-gradient(#ffffff,#f4f4f4 60%,#e6e6e6);"></div><div style="left:0px;top:18px;width:119.3px;height:488px;background:#e9e9e9;"></div><div style="left:0px;top:18px;width:119.3px;height:19px;background:#0a4ad8;"></div><div style="left:0px;top:37px;width:119.3px;height:1px;background:#b9b9b9;"></div><div style="left:0px;top:57px;width:119.3px;height:1px;background:#b9b9b9;"></div><div style="left:0px;top:77px;width:119.3px;height:1px;background:#b9b9b9;"></div><div style="left:0px;top:97px;width:119.3px;height:1px;background:#b9b9b9;"></div><div style="left:0px;top:117px;width:119.3px;height:1px;background:#b9b9b9;"></div><div style="left:0px;top:137px;width:119.3px;height:1px;background:#b9b9b9;"></div><div style="left:0px;top:157px;width:119.3px;height:1px;background:#b9b9b9;"></div><div style="left:0px;top:177px;width:119.3px;height:1px;background:#b9b9b9;"></div><div style="left:0px;top:197px;width:119.3px;height:1px;background:#b9b9b9;"></div><div style="left:0px;top:217px;width:119.3px;height:1px;background:#b9b9b9;"></div><div style="left:0px;top:237px;width:119.3px;height:1px;background:#b9b9b9;"></div><div style="left:0px;top:257px;width:119.3px;height:1px;background:#b9b9b9;"></div><div style="left:0px;top:277px;width:119.3px;height:1px;background:#b9b9b9;"></div><div style="left:0px;top:297px;width:119.3px;height:1px;background:#b9b9b9;"></div><div style="left:0px;top:317px;width:119.3px;height:1px;background:#b9b9b9;"></div><div style="left:0px;top:337px;width:119.3px;height:1px;background:#b9b9b9;"></div><div style="left:0px;top:357px;width:119.3px;height:1px;background:#b9b9b9;"></div><div style="left:0px;top:377px;width:119.3px;height:1px;background:#b9b9b9;"></div><div style="left:0px;top:397px;width:119.3px;height:1px;background:#b9b9b9;"></div><div style="left:0px;top:417px;width:119.3px;height:1px;background:#b9b9b9;"></div><div style="left:0px;top:437px;width:119.3px;height:1px;background:#b9b9b9;"></div><div style="left:0px;top:457px;width:119.3px;height:1px;background:#b9b9b9;"></div><div style="left:0px;top:477px;width:119.3px;height:1px;background:#b9b9b9;"></div><div style="left:0px;top:497px;width:119.3px;height:1px;background:#b9b9b9;"></div><div style="left:0px;top:517px;width:119.3px;height:1px;background:#b9b9b9;"></div><div style="left:0px;top:537px;width:119.3px;height:1px;background:#b9b9b9;"></div><div style="left:60px;top:0px;width:1px;height:506px;background:#b9b9b9;"></div><div style="left:119px;top:0px;width:1px;height:506px;background:#b9b9b9;"></div><div style="left:0px;top:17px;width:119.3px;height:1.2px;background:#000;"></div><div style="left:124px;top:19px;width:8px;height:189.5px;background:#c1c1c1;border-radius:4px;"></div></div>
<span class="t" style="left:1299.50px;top:266.70px;height:15px;line-height:15px;font-size:11.5px;color:#000;font-family:'Liberation Sans',sans-serif;font-weight:bold;letter-spacing:0.300px;">(61) Se...</span>
<span class="t" style="left:1362.40px;top:266.70px;height:15px;line-height:15px;font-size:11.5px;color:#000;font-family:'Liberation Sans',sans-serif;font-weight:bold;letter-spacing:0.595px;">Length</span>
<div style="left:1293.5px;top:282px;width:119px;height:488px;overflow:hidden;">
<span class="t" style="left:17.60px;top:2.00px;height:17px;line-height:17px;font-size:13px;color:#fff;font-family:'Liberation Sans',sans-serif;letter-spacing:-0.223px;">chr1</span>
<span class="t" style="left:64.65px;top:2.00px;height:17px;line-height:17px;font-size:13px;color:#fff;font-family:'Liberation Sans',sans-serif;letter-spacing:0.414px;">19515...</span>
<span class="t" style="left:17.60px;top:22.00px;height:17px;line-height:17px;font-size:13px;color:#111;font-family:'Liberation Sans',sans-serif;letter-spacing:-0.223px;">chr2</span>
<span class="t" style="left:64.65px;top:22.00px;height:17px;line-height:17px;font-size:13px;color:#111;font-family:'Liberation Sans',sans-serif;letter-spacing:0.414px;">18175...</span>
<span class="t" style="left:17.60px;top:42.00px;height:17px;line-height:17px;font-size:13px;color:#111;font-family:'Liberation Sans',sans-serif;letter-spacing:-0.223px;">chr3</span>
<span class="t" style="left:64.65px;top:42.00px;height:17px;line-height:17px;font-size:13px;color:#111;font-family:'Liberation Sans',sans-serif;letter-spacing:0.414px;">15974...</span>
<span class="t" style="left:17.60px;top:62.00px;height:17px;line-height:17px;font-size:13px;color:#111;font-family:'Liberation Sans',sans-serif;letter-spacing:-0.223px;">chr4</span>
<span class="t" style="left:64.65px;top:62.00px;height:17px;line-height:17px;font-size:13px;color:#111;font-family:'Liberation Sans',sans-serif;letter-spacing:0.414px;">15686...</span>
<span class="t" style="left:17.60px;top:82.00px;height:17px;line-height:17px;font-size:13px;color:#111;font-family:'Liberation Sans',sans-serif;letter-spacing:-0.223px;">chr5</span>
<span class="t" style="left:64.65px;top:82.00px;height:17px;line-height:17px;font-size:13px;color:#111;font-family:'Liberation Sans',sans-serif;letter-spacing:0.414px;">15175...</span>
<span class="t" style="left:17.60px;top:102.00px;height:17px;line-height:17px;font-size:13px;color:#111;font-family:'Liberation Sans',sans-serif;letter-spacing:-0.223px;">chr6</span>
<span class="t" style="left:64.65px;top:102.00px;height:17px;line-height:17px;font-size:13px;color:#111;font-family:'Liberation Sans',sans-serif;letter-spacing:0.414px;">14958...</span>
<span class="t" style="left:17.60px;top:122.00px;height:17px;line-height:17px;font-size:13px;color:#111;font-family:'Liberation Sans',sans-serif;letter-spacing:-0.223px;">chr7</span>
<span class="t" style="left:64.65px;top:122.00px;height:17px;line-height:17px;font-size:13px;color:#111;font-family:'Liberation Sans',sans-serif;letter-spacing:0.414px;">14499...</span>
<span class="t" style="left:17.60px;top:142.00px;height:17px;line-height:17px;font-size:13px;color:#111;font-family:'Liberation Sans',sans-serif;letter-spacing:-0.223px;">chr8</span>
<span class="t" style="left:64.65px;top:142.00px;height:17px;line-height:17px;font-size:13px;color:#111;font-family:'Liberation Sans',sans-serif;letter-spacing:0.414px;">13012...</span>
<span class="t" style="left:17.60px;top:162.00px;height:17px;line-height:17px;font-size:13px;color:#111;font-family:'Liberation Sans',sans-serif;letter-spacing:-0.223px;">chr9</span>
<span class="t" style="left:64.65px;top:162.00px;height:17px;line-height:17px;font-size:13px;color:#111;font-family:'Liberation Sans',sans-serif;letter-spacing:0.414px;">12435...</span>
<span class="t" style="left:13.45px;top:182.00px;height:17px;line-height:17px;font-size:13px;color:#111;font-family:'Liberation Sans',sans-serif;letter-spacing:0.036px;">chr10</span>
<span class="t" style="left:64.65px;top:182.00px;height:17px;line-height:17px;font-size:13px;color:#111;font-family:'Liberation Sans',sans-serif;letter-spacing:0.414px;">13053...</span>
<span class="t" style="left:13.45px;top:202.00px;height:17px;line-height:17px;font-size:13px;color:#111;font-family:'Liberation Sans',sans-serif;letter-spacing:0.229px;">chr11</span>
<span class="t" style="left:64.65px;top:202.00px;height:17px;line-height:17px;font-size:13px;color:#111;font-family:'Liberation Sans',sans-serif;letter-spacing:0.414px;">12197...</span>
<span class="t" style="left:13.45px;top:222.00px;height:17px;line-height:17px;font-size:13px;color:#111;font-family:'Liberation Sans',sans-serif;letter-spacing:0.036px;">chr12</span>
<span class="t" style="left:64.65px;top:222.00px;height:17px;line-height:17px;font-size:13px;color:#111;font-family:'Liberation Sans',sans-serif;letter-spacing:0.414px;">12009...</span>
<span class="t" style="left:13.45px;top:242.00px;height:17px;line-height:17px;font-size:13px;color:#111;font-family:'Liberation Sans',sans-serif;letter-spacing:0.036px;">chr13</span>
<span class="t" style="left:64.65px;top:242.00px;height:17px;line-height:17px;font-size:13px;color:#111;font-family:'Liberation Sans',sans-serif;letter-spacing:0.414px;">12088...</span>
<span class="t" style="left:13.45px;top:262.00px;height:17px;line-height:17px;font-size:13px;color:#111;font-family:'Liberation Sans',sans-serif;letter-spacing:0.036px;">chr14</span>
<span class="t" style="left:64.65px;top:262.00px;height:17px;line-height:17px;font-size:13px;color:#111;font-family:'Liberation Sans',sans-serif;letter-spacing:0.414px;">12513...</span>
<span class="t" style="left:13.45px;top:282.00px;height:17px;line-height:17px;font-size:13px;color:#111;font-family:'Liberation Sans',sans-serif;letter-spacing:0.036px;">chr15</span>
<span class="t" style="left:64.65px;top:282.00px;height:17px;line-height:17px;font-size:13px;color:#111;font-family:'Liberation Sans',sans-serif;letter-spacing:0.414px;">10407...</span>
<span class="t" style="left:13.45px;top:302.00px;height:17px;line-height:17px;font-size:13px;color:#111;font-family:'Liberation Sans',sans-serif;letter-spacing:0.036px;">chr16</span>
<span class="t" style="left:64.65px;top:302.00px;height:17px;line-height:17px;font-size:13px;color:#111;font-family:'Liberation Sans',sans-serif;letter-spacing:0.414px;">98008...</span>
<span class="t" style="left:13.45px;top:322.00px;height:17px;line-height:17px;font-size:13px;color:#111;font-family:'Liberation Sans',sans-serif;letter-spacing:0.036px;">chr17</span>
<span class="t" style="left:64.65px;top:322.00px;height:17px;line-height:17px;font-size:13px;color:#111;font-family:'Liberation Sans',sans-serif;letter-spacing:0.414px;">95294...</span>
<span class="t" style="left:13.45px;top:342.00px;height:17px;line-height:17px;font-size:13px;color:#111;font-family:'Liberation Sans',sans-serif;letter-spacing:0.036px;">chr18</span>
<span class="t" style="left:64.65px;top:342.00px;height:17px;line-height:17px;font-size:13px;color:#111;font-family:'Liberation Sans',sans-serif;letter-spacing:0.414px;">90720...</span>
<span class="t" style="left:13.45px;top:362.00px;height:17px;line-height:17px;font-size:13px;color:#111;font-family:'Liberation Sans',sans-serif;letter-spacing:0.036px;">chr19</span>
<span class="t" style="left:64.65px;top:362.00px;height:17px;line-height:17px;font-size:13px;color:#111;font-family:'Liberation Sans',sans-serif;letter-spacing:0.414px;">61420...</span>
<span class="t" style="left:17.05px;top:382.00px;height:17px;line-height:17px;font-size:13px;color:#111;font-family:'Liberation Sans',sans-serif;letter-spacing:-0.308px;">chrX</span>
<span class="t" style="left:64.65px;top:382.00px;height:17px;line-height:17px;font-size:13px;color:#111;font-family:'Liberation Sans',sans-serif;letter-spacing:0.414px;">16947...</span>
<span class="t" style="left:17.05px;top:402.00px;height:17px;line-height:17px;font-size:13px;color:#111;font-family:'Liberation Sans',sans-serif;letter-spacing:-0.308px;">chrY</span>
<span class="t" style="left:64.65px;top:402.00px;height:17px;line-height:17px;font-size:13px;color:#111;font-family:'Liberation Sans',sans-serif;letter-spacing:0.414px;">91455...</span>
<span class="t" style="left:15.55px;top:422.00px;height:17px;line-height:17px;font-size:13px;color:#111;font-family:'Liberation Sans',sans-serif;letter-spacing:-0.098px;">chrM</span>
<span class="t" style="left:70.80px;top:422.00px;height:17px;line-height:17px;font-size:13px;color:#111;font-family:'Liberation Sans',sans-serif;letter-spacing:0.370px;">16299</span>
<span class="t" style="left:3.80px;top:442.00px;height:17px;line-height:17px;font-size:13px;color:#111;font-family:'Liberation Sans',sans-serif;letter-spacing:-0.163px;">chr1_G...</span>
<span class="t" style="left:67.05px;top:442.00px;height:17px;line-height:17px;font-size:13px;color:#111;font-family:'Liberation Sans',sans-serif;letter-spacing:0.353px;">169725</span>
<span class="t" style="left:3.80px;top:462.00px;height:17px;line-height:17px;font-size:13px;color:#111;font-family:'Liberation Sans',sans-serif;letter-spacing:-0.163px;">chr1_G...</span>
<span class="t" style="left:67.05px;top:462.00px;height:17px;line-height:17px;font-size:13px;color:#111;font-family:'Liberation Sans',sans-serif;letter-spacing:0.353px;">241735</span>
<span class="t" style="left:3.80px;top:482.00px;height:17px;line-height:17px;font-size:13px;color:#111;font-family:'Liberation Sans',sans-serif;letter-spacing:-0.163px;">chr1_G...</span>
<span class="t" style="left:67.05px;top:482.00px;height:17px;line-height:17px;font-size:13px;color:#111;font-family:'Liberation Sans',sans-serif;letter-spacing:0.353px;">152618</span>
</div>
<div style="left:1438px;top:268px;width:21px;height:381px;background:rgba(0,0,0,.05);border-radius:5px;border:1px solid rgba(0,0,0,.045);"></div>
<div style="left:1438.5px;top:404px;width:20.5px;height:122px;background:#fff;border-radius:5px;box-shadow:0 0.5px 1.2px rgba(0,0,0,.3);"></div>
<span class="t" style="left:1445.9px;top:321.6px;height:17px;line-height:17px;font-size:13px;color:#1a1a1a;letter-spacing:0.320px;transform-origin:0 0;transform:rotate(90deg) translate(0,-8.5px);">Bookmarks</span>
<span class="t" style="left:1445.9px;top:414.7px;height:17px;line-height:17px;font-size:13px;color:#1a1a1a;letter-spacing:0.298px;transform-origin:0 0;transform:rotate(90deg) translate(0,-8.5px);">Current Genome</span>
<span class="t" style="left:1445.9px;top:539.6px;height:17px;line-height:17px;font-size:13px;color:#1a1a1a;letter-spacing:0.369px;transform-origin:0 0;transform:rotate(90deg) translate(0,-8.5px);">Restriction Sites</span>
<div style="left:1445px;top:394px;width:1px;height:9px;background:#cfcfcf;"></div>
<div style="left:1445px;top:528px;width:1px;height:9px;background:#cfcfcf;"></div>
<svg style="left:1440.5px;top:279px" width="16" height="18" viewBox="0 0 16 18"><path d="M3.4 3.6 L9.8 9 L3.4 14.4" fill="none" stroke="#3a98c8" stroke-width="2.8" stroke-linejoin="miter" stroke-linecap="butt" stroke-linecap="round" stroke-linejoin="round"/><rect x="1.5" y="4" width="0.8" height="10" fill="#c0c0c0"/></svg>
<div style="left:1265px;top:801.5px;width:200px;height:19px;border:1px solid #b9b9b9;background:#ececec;"></div>
<div style="left:1283.5px;top:803px;width:41px;height:17px;background:#ececa8;"></div>
<div style="left:1324.5px;top:803px;width:1.2px;height:17px;background:#9a9a9a;"></div>
<span class="t" style="left:1326.80px;top:802.50px;height:18px;line-height:18px;font-size:14px;color:#111;font-family:'Liberation Sans',sans-serif;letter-spacing:0.031px;">465M of 2048M</span>
<svg style="left:1268px;top:804px" width="13" height="15" viewBox="0 0 13 15"><rect x="1.5" y="2.2" width="10" height="1.6" fill="#222"/><rect x="4.8" y="0.8" width="3.4" height="1.6" fill="#222"/><path d="M2.4 4.6 H10.6 L10 13.6 H3 Z" fill="#333"/><rect x="4.4" y="5.8" width="0.9" height="6.6" fill="#bbb"/><rect x="6.1" y="5.8" width="0.9" height="6.6" fill="#bbb"/><rect x="7.8" y="5.8" width="0.9" height="6.6" fill="#bbb"/></svg>
<svg style="left:62.2px;top:90.3px" width="29.5" height="25" viewBox="0 0 29.5 25"><defs><linearGradient id="fo1" x1="0" y1="0" x2="0.3" y2="1"><stop offset="0" stop-color="#8fb4e2"/><stop offset="0.5" stop-color="#7ea7da"/><stop offset="1" stop-color="#5b8bc8"/></linearGradient>
<linearGradient id="fo2" x1="0" y1="0" x2="1" y2="0"><stop offset="0" stop-color="#d0d0d0"/><stop offset="1" stop-color="#a8a8a8"/></linearGradient></defs>
<path d="M5.3 4.6 Q5.3 4.2 5.8 4.2 H12.4 V21 H5.8 Q5.3 21 5.3 20.5 Z" fill="url(#fo2)" stroke="#555" stroke-width="0.9"/>
<path d="M12.4 2.2 H19.2 L22.4 5.6 V10 H12.4 Z" fill="#fbfbfb" stroke="#555" stroke-width="0.9" stroke-linejoin="round"/>
<path d="M19.2 2.2 V5.6 H22.4" fill="#e6e6e6" stroke="#666" stroke-width="0.6"/>
<path d="M14.2 4.7 H18 M14.2 6.9 H18" stroke="#8a8a8a" stroke-width="0.9"/>
<path d="M7.7 9.3 H24.5 L23.5 21.2 H6 Z" fill="url(#fo1)" stroke="#3465a4" stroke-width="1" stroke-linejoin="round"/>
<path d="M8.6 10.4 H23.4 L22.6 20.2" fill="none" stroke="#b4cdec" stroke-width="0.6" opacity=".8"/></svg>
<svg style="left:94.2px;top:90.3px" width="29.5" height="25" viewBox="0 0 29.5 25"><rect x="4.2" y="2" width="21.2" height="21.6" fill="#fff"/><rect x="4.2" y="2" width="21.2" height="0.6" fill="#dadada"/>
<path d="M9 4.3 H21 M11 6.6 H19 M10 12 H20 M11 15.2 H19 M11 17.6 H19 M9 20.6 H21" stroke="#9cc4ee" stroke-width="0.9"/>
<path d="M22.4 4.2 C21 8.8 8.6 7.6 7.8 12.2" fill="none" stroke="#ee7a68" stroke-width="1.3" stroke-linecap="round"/>
<path d="M22.4 11.6 C22 16.6 9 15.6 7.8 20.8" fill="none" stroke="#4a6fdc" stroke-width="1.3" stroke-linecap="round"/>
<path d="M7.6 4.2 C9 8.8 21.4 6.6 22.4 11.6" fill="none" stroke="#0a22ff" stroke-width="2.2" stroke-linecap="round"/>
<path d="M7.8 12.2 C8.6 17.6 21.2 15.2 22.4 20.8" fill="none" stroke="#ff1a0a" stroke-width="2.2" stroke-linecap="round"/></svg>
<svg style="left:126.2px;top:90.3px" width="29.5" height="25" viewBox="0 0 29.5 25"><defs><linearGradient id="cam1" x1="0" y1="0" x2="0" y2="1"><stop offset="0" stop-color="#f2f2f2"/><stop offset="0.5" stop-color="#c9c9c9"/><stop offset="1" stop-color="#8f8f8f"/></linearGradient></defs>
<rect x="14.5" y="5.6" width="8" height="3" rx="0.8" fill="#d8d8d8" stroke="#8a8a8a" stroke-width="0.5"/>
<rect x="4.8" y="7.2" width="20.4" height="12.4" rx="1.6" fill="url(#cam1)" stroke="#777" stroke-width="0.7"/>
<rect x="5.4" y="8.2" width="4.4" height="10.6" rx="0.8" fill="#3c3c3c"/>
<rect x="10.4" y="8.6" width="2" height="9.6" fill="#e8e8e8" opacity=".7"/>
<circle cx="17.4" cy="14" r="4.5" fill="#dcdcdc" stroke="#7b7b7b" stroke-width="0.7"/>
<circle cx="17.4" cy="14" r="3" fill="#2b2b2b"/><circle cx="16.6" cy="13.1" r="0.9" fill="#9ab"/>
<rect x="21.6" y="8.6" width="2.4" height="1.6" fill="#6e8fd0"/></svg>
<svg style="left:158.2px;top:90.3px" width="29.5" height="25" viewBox="0 0 29.5 25"><path d="M13.28 5.56 L13.76 2.45 L15.84 2.45 L16.32 5.56 L18.71 6.55 L21.24 4.69 L22.71 6.16 L20.85 8.69 L21.84 11.08 L24.95 11.56 L24.95 13.64 L21.84 14.12 L20.85 16.51 L22.71 19.04 L21.24 20.51 L18.71 18.65 L16.32 19.64 L15.84 22.75 L13.76 22.75 L13.28 19.64 L10.89 18.65 L8.36 20.51 L6.89 19.04 L8.75 16.51 L7.76 14.12 L4.65 13.64 L4.65 11.56 L7.76 11.08 L8.75 8.69 L6.89 6.16 L8.36 4.69 L10.89 6.55 Z" fill="#737373" stroke="#737373" stroke-width="1.6" stroke-linejoin="round"/><circle cx="14.8" cy="12.6" r="4.1" fill="#efefef"/></svg>
<svg style="left:190.2px;top:90.3px" width="29.5" height="25" viewBox="0 0 29.5 25"><defs><linearGradient id="st1" x1="0" y1="0" x2="0" y2="1"><stop offset="0" stop-color="#e86060"/><stop offset="0.52" stop-color="#d23030"/><stop offset="0.56" stop-color="#c40808"/><stop offset="1" stop-color="#c20000"/></linearGradient></defs>
<ellipse cx="14.8" cy="22.4" rx="8.4" ry="1.4" fill="#000" opacity=".22"/>
<path d="M24.87 16.67 L18.97 22.57 L10.63 22.57 L4.73 16.67 L4.73 8.33 L10.63 2.43 L18.97 2.43 L24.87 8.33 Z" fill="url(#st1)" stroke="#a40000" stroke-width="1"/>
<path d="M23.67 16.17 L18.47 21.37 L11.13 21.37 L5.93 16.17 L5.93 8.83 L11.13 3.63 L18.47 3.63 L23.67 8.83 Z" fill="none" stroke="#f08a8a" stroke-width="0.6" opacity=".7"/>
<path d="M10.8 8.5 L18.8 16.5 M18.8 8.5 L10.8 16.5" stroke="#fff" stroke-width="1.8" stroke-linecap="round"/></svg>
<svg style="left:222.2px;top:90.3px" width="29.5" height="25" viewBox="0 0 29.5 25"><rect x="4.2" y="2" width="21.2" height="22" fill="#fff"/><rect x="4.2" y="2" width="21.2" height="0.6" fill="#dadada"/>
<defs><linearGradient id="bk1" x1="0" y1="0" x2="0.3" y2="1"><stop offset="0" stop-color="#b3a574"/><stop offset="1" stop-color="#9a8a58"/></linearGradient></defs>
<path d="M10.2 23 L21.4 20.4 L22 18.7" fill="none" stroke="#e8e8e8" stroke-width="1.6"/>
<path d="M10.2 23 L21.4 20.6" fill="none" stroke="#6b5c38" stroke-width="0.5"/>
<path d="M10.7 5 L18.6 2.9 L22 18.7 L12.4 21.7 Z" fill="url(#bk1)" stroke="#7a6a40" stroke-width="0.6" stroke-linejoin="round"/>
<path d="M7 7.1 L8.1 5 L10.7 5 L12.4 21.7 L10.2 23 Z" fill="#4b3f22" stroke="#3a3018" stroke-width="0.5" stroke-linejoin="round"/>
<path d="M13.6 8 L17.4 7.1 M13.8 9.3 L16.6 8.7" stroke="#5e5030" stroke-width="0.9"/></svg>
<svg style="left:254.2px;top:90.3px" width="29.5" height="25" viewBox="0 0 29.5 25"><defs><linearGradient id="ar0" x1="0" y1="0" x2="0" y2="1"><stop offset="0" stop-color="#7fc238"/><stop offset="0.5" stop-color="#5aae12"/><stop offset="1" stop-color="#62c410"/></linearGradient></defs>
<ellipse cx="15" cy="20.6" rx="9.5" ry="2.6" fill="#000" opacity=".10"/>
<g transform=""><path d="M5.9 12.7 L16.4 3.7 V8 H22.5 V17.4 H16.4 V21.5 Z" fill="url(#ar0)" stroke="#3a8a00" stroke-width="1.2" stroke-linejoin="miter"/><path d="M7.8 12.7 L15.2 6.4 V9.2 H21.3 V16.2 H15.2 V19 Z" fill="none" stroke="#b6e27a" stroke-width="0.7" opacity=".85"/></g></svg>
<svg style="left:286.2px;top:90.3px" width="29.5" height="25" viewBox="0 0 29.5 25"><defs><linearGradient id="ar1" x1="0" y1="0" x2="0" y2="1"><stop offset="0" stop-color="#7fc238"/><stop offset="0.5" stop-color="#5aae12"/><stop offset="1" stop-color="#62c410"/></linearGradient></defs>
<ellipse cx="15" cy="20.6" rx="9.5" ry="2.6" fill="#000" opacity=".10"/>
<g transform="translate(29.5,0) scale(-1,1)"><path d="M5.9 12.7 L16.4 3.7 V8 H22.5 V17.4 H16.4 V21.5 Z" fill="url(#ar1)" stroke="#3a8a00" stroke-width="1.2" stroke-linejoin="miter"/><path d="M7.8 12.7 L15.2 6.4 V9.2 H21.3 V16.2 H15.2 V19 Z" fill="none" stroke="#b6e27a" stroke-width="0.7" opacity=".85"/></g></svg>
<svg style="left:318.2px;top:90.3px" width="29.5" height="25" viewBox="0 0 29.5 25"><rect x="4.2" y="2" width="21.2" height="21.6" fill="#fff"/><rect x="4.2" y="2" width="21.2" height="0.6" fill="#dadada"/><rect x="6.8" y="1.8" width="15.9" height="21.7" rx="0.8" fill="#050505"/><rect x="11.1" y="2.9" width="6.9" height="5.7" rx="0.5" fill="#fff"/><rect x="11.1" y="9.9" width="6.9" height="5.7" rx="0.5" fill="#fff"/><rect x="11.1" y="16.8" width="6.9" height="5.7" rx="0.5" fill="#fff"/><rect x="7.9" y="2.9" width="1.9" height="1.6" rx="0.3" fill="#fff"/><rect x="7.9" y="6.6" width="1.9" height="1.6" rx="0.3" fill="#fff"/><rect x="7.9" y="10.0" width="1.9" height="1.6" rx="0.3" fill="#fff"/><rect x="7.9" y="13.6" width="1.9" height="1.6" rx="0.3" fill="#fff"/><rect x="7.9" y="17.3" width="1.9" height="1.6" rx="0.3" fill="#fff"/><rect x="7.9" y="20.9" width="1.9" height="1.6" rx="0.3" fill="#fff"/><rect x="19.5" y="2.9" width="1.9" height="1.6" rx="0.3" fill="#fff"/><rect x="19.5" y="6.6" width="1.9" height="1.6" rx="0.3" fill="#fff"/><rect x="19.5" y="10.0" width="1.9" height="1.6" rx="0.3" fill="#fff"/><rect x="19.5" y="13.6" width="1.9" height="1.6" rx="0.3" fill="#fff"/><rect x="19.5" y="17.3" width="1.9" height="1.6" rx="0.3" fill="#fff"/><rect x="19.5" y="20.9" width="1.9" height="1.6" rx="0.3" fill="#fff"/></svg>
<svg style="left:350.2px;top:90.3px" width="29.5" height="25" viewBox="0 0 29.5 25"><rect x="3.6" y="2.9" width="22.3" height="19.9" fill="#fff"/>
<rect x="3.8" y="3.7" width="22" height="1.9" fill="#444"/><rect x="3.8" y="20.7" width="22" height="1.9" fill="#444"/>
<path d="M3.8 8.1 H14.9 M3.8 11.1 H14.9 M3.8 14.1 H14.9 M3.8 17.1 H14.9 M3.8 20 H14.9" stroke="#8db2df" stroke-width="0.9"/>
<rect x="17.7" y="17.9" width="8.2" height="1.7" fill="#c4dcf4"/>
<path d="M21.3 6.3 L25.6 10.4 H23.3 V16.2 H19.4 V10.4 H17 Z" fill="#6f5596" stroke="#5c447e" stroke-width="0.4"/></svg>
<svg style="left:382.2px;top:90.3px" width="29.5" height="25" viewBox="0 0 29.5 25"><rect x="3.8" y="1.8" width="21.9" height="21.9" fill="#a6a6a6"/>
<rect x="6.8" y="4.4" width="16.4" height="16.8" fill="#acacac" stroke="#979797" stroke-width="1.2"/>
<rect x="7.6" y="6.2" width="14.8" height="1" fill="#9a9a9a"/><rect x="7.6" y="18.6" width="14.8" height="1" fill="#9a9a9a"/>
<path d="M8 9 H14.4 M8 11 H14.4 M8 13 H14.4 M8 15 H14.4" stroke="#a2a2a2" stroke-width="0.8"/>
<path d="M19.4 7.8 L22 10.4 H20.6 V14.6 H18.2 V10.4 H16.8 Z" fill="#8f8f8f"/></svg>
<svg style="left:414.2px;top:90.3px" width="29.5" height="25" viewBox="0 0 29.5 25"><rect x="3.8" y="1.8" width="21.9" height="21.9" fill="#a9a9a9"/>
<path d="M3.8 3 H14.6 M3.8 6 H14.6 M3.8 8.2 H14.6 M3.8 11.2 H14.6 M3.8 14.2 H14.6 M3.8 17.2 H14.6 M3.8 20.2 H14.6 M3.8 22.4 H14.6" stroke="#a0a0a0" stroke-width="0.9"/>
<rect x="17.4" y="19.6" width="8.3" height="2" fill="#a3a3a3"/></svg>
<svg style="left:446.2px;top:90.3px" width="29.5" height="25" viewBox="0 0 29.5 25"><path d="M7.3 3.3 H22.4 Q25 3.3 25 5.9 V14.2 Q25 16.8 22.4 16.8 H13.6 L11.3 21.2 L9.4 16.8 H7.3 Q4.7 16.8 4.7 14.2 V5.9 Q4.7 3.3 7.3 3.3 Z" fill="none" stroke="#ffa500" stroke-width="1.8" stroke-linejoin="round"/></svg>
<svg style="left:478.2px;top:90.3px" width="29.5" height="25" viewBox="0 0 29.5 25"><rect x="19" y="4.8" width="2.6" height="6" fill="#828282"/>
<path d="M14.7 3 L24.6 12.2 L23.4 13.4 L14.7 5.6 L6 13.4 L4.8 12.2 Z" fill="#828282" stroke="#828282" stroke-width="0.9" stroke-linejoin="round"/>
<path d="M8.1 13.4 L14.7 7.4 L21.6 13.4 V21.5 H17.1 V16.4 Q17.1 14.9 15.6 14.9 H14.1 Q12.6 14.9 12.6 16.4 V21.5 H8.1 Z" fill="#828282"/></svg>
<svg style="left:81px;top:144px" width="30" height="24" viewBox="0 0 30 24"><defs><radialGradient id="mg" cx="0.45" cy="0.4" r="0.65"><stop offset="0" stop-color="#f4f8fd"/><stop offset="0.7" stop-color="#cfe0f4"/><stop offset="1" stop-color="#a9c7ea"/></radialGradient></defs>
<path d="M18.4 15.2 L22.2 17.8" stroke="#7a7a7a" stroke-width="3" stroke-linecap="round"/><path d="M19 15.6 L22 17.6" stroke="#e6e6e6" stroke-width="1.2" stroke-linecap="round"/>
<circle cx="13.95" cy="10.8" r="6.5" fill="#fff" stroke="#858585" stroke-width="1"/>
<circle cx="13.95" cy="10.8" r="5" fill="url(#mg)" stroke="#6a9fe0" stroke-width="1.3"/></svg>
<svg style="left:367px;top:144px" width="30" height="24" viewBox="0 0 30 24"><defs><linearGradient id="cu" x1="0" y1="0" x2="0.8" y2="1"><stop offset="0" stop-color="#4f8ede"/><stop offset="0.45" stop-color="#2450b0"/><stop offset="1" stop-color="#0f2a80"/></linearGradient></defs>
<rect x="8" y="19.6" width="9" height="0.7" fill="#c8c8c8"/>
<path d="M10.1 4 L10.1 17.8 L13.6 14.4 L16.6 19.6 L19.8 18.4 L17 13 L21.2 12.4 Z" fill="url(#cu)"/></svg>
<svg style="left:403px;top:144px" width="30" height="24" viewBox="0 0 30 24">
<path d="M11.4 20.4 C10.6 17.6 8.6 16 7.6 13.6 C7.2 12.4 8.6 11.8 9.6 12.8 L11.2 14.6 L10.4 7.6 C10.2 6.2 12 6 12.4 7.4 L13.4 11.6 L13.2 5.8 C13.2 4.4 15.2 4.4 15.4 5.8 L15.8 11.4 L16.6 6.4 C16.8 5 18.6 5.2 18.6 6.6 L18.4 12 L19.6 8.6 C20 7.4 21.6 7.8 21.4 9.2 C21 12.4 21 15.4 19.4 17.8 L18.8 20.4" fill="#fff" stroke="#111" stroke-width="1.25" stroke-linejoin="round" stroke-linecap="round"/></svg>
<div style="left:449px;top:154.2px;width:12.5px;height:3.8px;background:#7aa5ea;border:1px solid #3a6bc8;border-radius:1px;"></div>
<svg style="left:1027px;top:149px" width="14" height="14" viewBox="0 0 14 14"><path d="M5.4 1.3 H8.6 V5.4 H12.7 V8.6 H8.6 V12.7 H5.4 V8.6 H1.3 V5.4 H5.4 Z" fill="#b9d1ee" stroke="#2f5fa8" stroke-width="1.1" stroke-linejoin="round"/></svg>
<svg style="left:85px;top:507.70000000000005px" width="14" height="14" viewBox="0 0 14 14"><path d="M5.4 1.3 H8.6 V5.4 H12.7 V8.6 H8.6 V12.7 H5.4 V8.6 H1.3 V5.4 H5.4 Z" fill="#b9d1ee" stroke="#2f5fa8" stroke-width="1.1" stroke-linejoin="round"/></svg>
<svg style="left:1066.6px;top:149.6px" width="11" height="14" viewBox="0 0 14 17"><path d="M1 7.6 C1.6 3.6 6 1.6 9.4 3.6 L10.6 1.4 L13 7 L7 7.4 L8.4 5.4 C6 4 3.4 5.4 3 7.8 Z" fill="#2a5fd0"/><path d="M13 9.4 C12.4 13.4 8 15.4 4.6 13.4 L3.4 15.6 L1 10 L7 9.6 L5.6 11.6 C8 13 10.6 11.6 11 9.2 Z" fill="#2a8aee"/></svg>
<svg style="left:1158px;top:148px" width="14" height="16" viewBox="0 0 14 16">
<rect x="1.5" y="0.2" width="11" height="1.5" fill="#f09a1a"/><rect x="1.5" y="7.2" width="11" height="1.5" fill="#f09a1a"/><rect x="1.5" y="14.3" width="11" height="1.5" fill="#f09a1a"/>
<path d="M13.5 1.2 C10 5 4 3.6 0.6 7.9 C4 12.6 10 11 13.5 14.8" fill="none" stroke="#8db2ea" stroke-width="2.6"/>
<path d="M0.5 1.2 C4 5 10 3.6 13.4 7.9 C10 12.6 4 11 0.5 14.8" fill="none" stroke="#2b55bb" stroke-width="2.4"/></svg>
<svg style="left:801px;top:141px" width="14" height="16" viewBox="0 0 14 16"><path d="M1.4 1 V8.6 L6.7 14.4 L12 8.6 V1" fill="#f8f4b8" stroke="#222" stroke-width="1.1" stroke-linejoin="round"/></svg>
</div></body></html>
